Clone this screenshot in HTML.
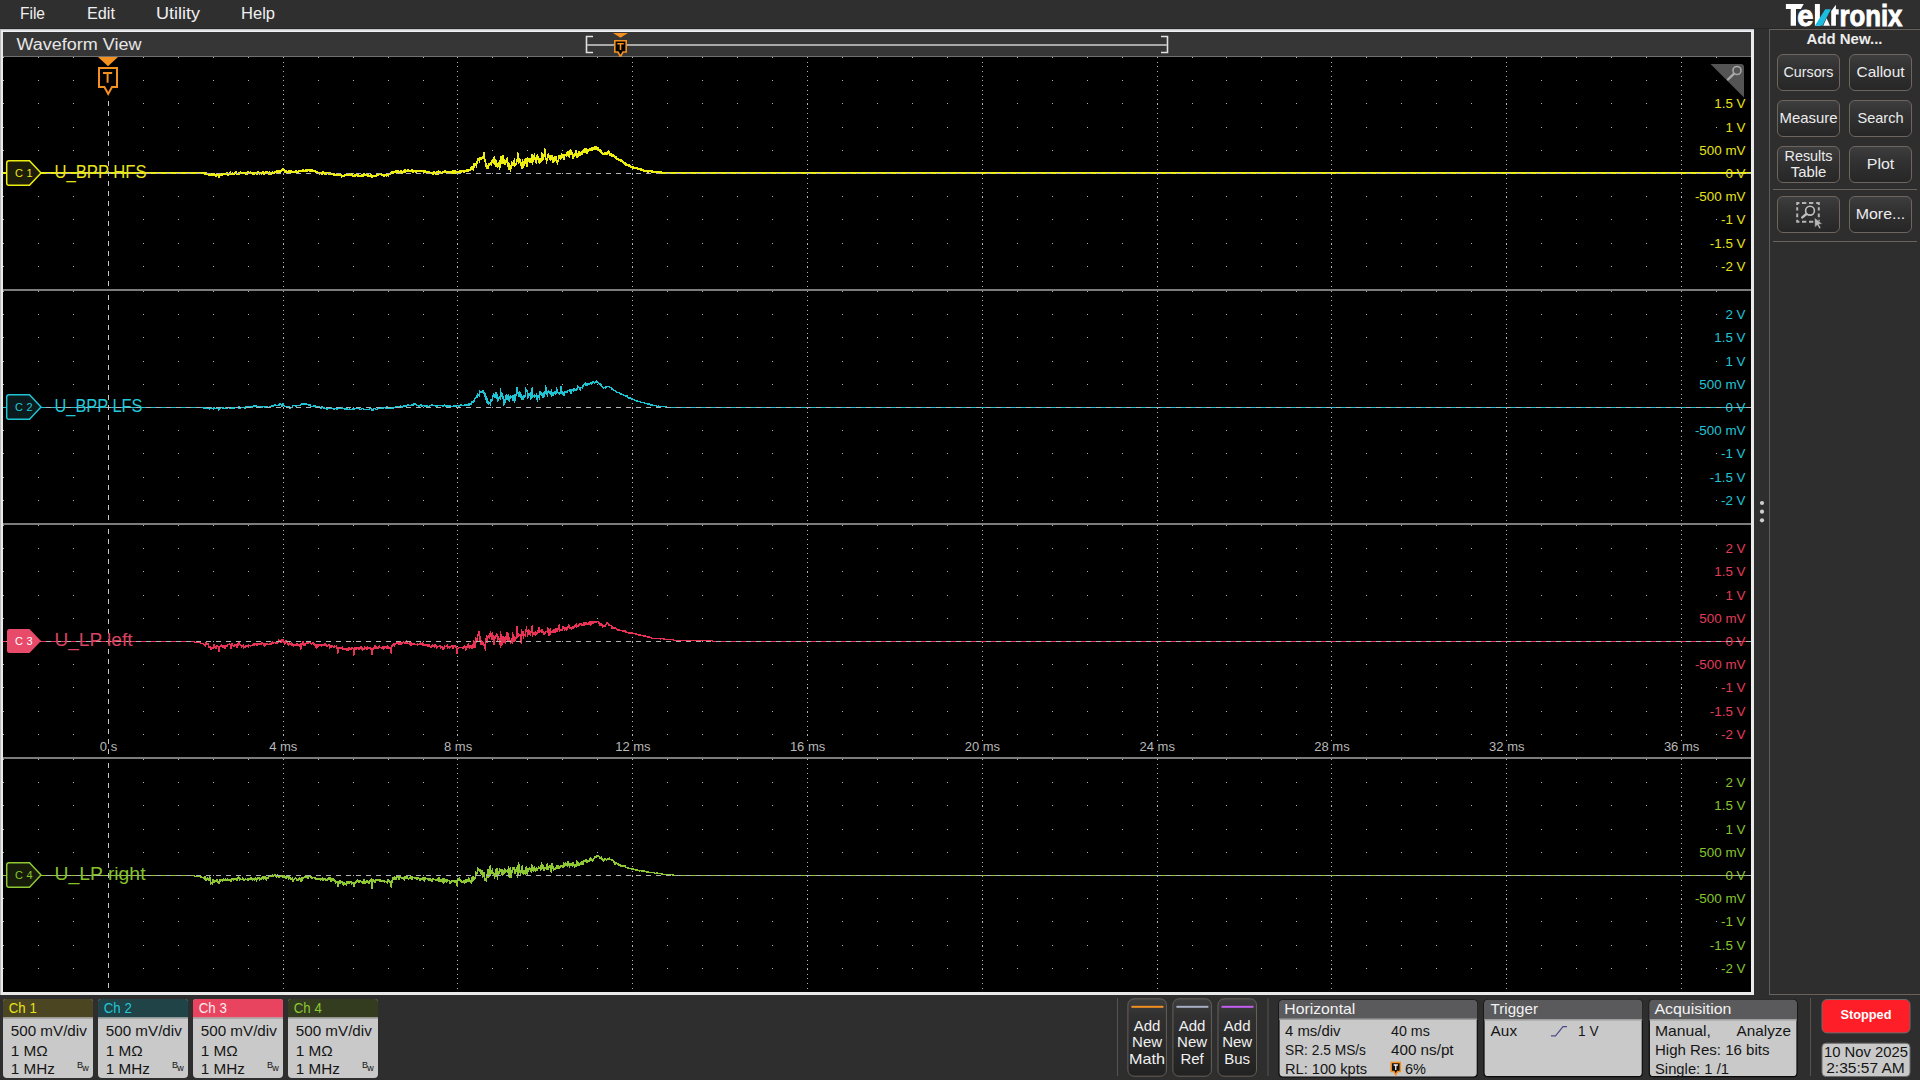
<!DOCTYPE html><html><head><meta charset="utf-8"><style>html,body{margin:0;padding:0;background:#2e2e2e;overflow:hidden;width:1920px;height:1080px}svg{display:block;font-family:"Liberation Sans",sans-serif}</style></head><body>
<svg width="1920" height="1080" viewBox="0 0 1920 1080" font-family="Liberation Sans, sans-serif">
<rect width="1920" height="1080" fill="#2e2e2e"/>
<rect x="0" y="0" width="1920" height="29" fill="#2f2f2f"/><rect x="0" y="28" width="1920" height="1" fill="#262626"/>
<text x="20" y="19" font-size="16" fill="#f0f0f0" textLength="25" lengthAdjust="spacingAndGlyphs">File</text>
<text x="87" y="19" font-size="16" fill="#f0f0f0" textLength="28" lengthAdjust="spacingAndGlyphs">Edit</text>
<text x="156" y="19" font-size="16" fill="#f0f0f0" textLength="44" lengthAdjust="spacingAndGlyphs">Utility</text>
<text x="241" y="19" font-size="16" fill="#f0f0f0" textLength="34" lengthAdjust="spacingAndGlyphs">Help</text>
<rect x="0" y="29" width="1754" height="966" fill="#e9e9e9"/>
<rect x="0" y="29" width="1" height="966" fill="#b9bcc0"/>
<rect x="0" y="29" width="1754" height="1" fill="#c2c5cb"/>
<rect x="1" y="30" width="1752" height="1" fill="#dfe0e2"/>
<rect x="1" y="31" width="1752" height="1" fill="#f1f2f4"/>
<rect x="3" y="32" width="1748" height="24" fill="#363636"/>
<rect x="3" y="56" width="1748" height="1" fill="#707070"/>
<text x="16.5" y="50" font-size="16" fill="#e6e6e6" textLength="125" lengthAdjust="spacingAndGlyphs">Waveform View</text>
<path d="M593 36.5H586.5V52.5H593M1161 36.5H1167.5V52.5H1161" stroke="#e0e0e0" stroke-width="1.6" fill="none"/>
<rect x="587" y="44" width="580" height="2" fill="#a9a9a9"/>
<path d="M613 33H628L620.5 37.8Z" fill="#f39020"/>
<path d="M614.8 40.8H626.2V52H623L620.5 56.5L618 52H614.8Z" fill="#000" stroke="#f39020" stroke-width="1.6"/>
<path d="M617.3 43.8H623.7M620.5 43.8V50" stroke="#f39020" stroke-width="1.6" fill="none"/>
<rect x="3" y="57" width="1748" height="935" fill="#000"/>
<path d="M3 57.5h1M3 80.5h1M3 103.5h1M3 127.5h1M3 150.5h1M3 173.5h1M3 196.5h1M3 219.5h1M3 243.5h1M3 266.5h1M3 291.5h1M3 314.5h1M3 337.5h1M3 361.5h1M3 384.5h1M3 407.5h1M3 430.5h1M3 453.5h1M3 477.5h1M3 500.5h1M3 525.5h1M3 548.5h1M3 571.5h1M3 595.5h1M3 618.5h1M3 641.5h1M3 664.5h1M3 687.5h1M3 711.5h1M3 734.5h1M3 759.5h1M3 782.5h1M3 805.5h1M3 829.5h1M3 852.5h1M3 875.5h1M3 898.5h1M3 921.5h1M3 945.5h1M3 968.5h1M38 57.5h1M38 80.5h1M38 103.5h1M38 127.5h1M38 150.5h1M38 173.5h1M38 196.5h1M38 219.5h1M38 243.5h1M38 266.5h1M38 291.5h1M38 314.5h1M38 337.5h1M38 361.5h1M38 384.5h1M38 407.5h1M38 430.5h1M38 453.5h1M38 477.5h1M38 500.5h1M38 525.5h1M38 548.5h1M38 571.5h1M38 595.5h1M38 618.5h1M38 641.5h1M38 664.5h1M38 687.5h1M38 711.5h1M38 734.5h1M38 759.5h1M38 782.5h1M38 805.5h1M38 829.5h1M38 852.5h1M38 875.5h1M38 898.5h1M38 921.5h1M38 945.5h1M38 968.5h1M73 57.5h1M73 80.5h1M73 103.5h1M73 127.5h1M73 150.5h1M73 173.5h1M73 196.5h1M73 219.5h1M73 243.5h1M73 266.5h1M73 291.5h1M73 314.5h1M73 337.5h1M73 361.5h1M73 384.5h1M73 407.5h1M73 430.5h1M73 453.5h1M73 477.5h1M73 500.5h1M73 525.5h1M73 548.5h1M73 571.5h1M73 595.5h1M73 618.5h1M73 641.5h1M73 664.5h1M73 687.5h1M73 711.5h1M73 734.5h1M73 759.5h1M73 782.5h1M73 805.5h1M73 829.5h1M73 852.5h1M73 875.5h1M73 898.5h1M73 921.5h1M73 945.5h1M73 968.5h1M143 57.5h1M143 80.5h1M143 103.5h1M143 127.5h1M143 150.5h1M143 173.5h1M143 196.5h1M143 219.5h1M143 243.5h1M143 266.5h1M143 291.5h1M143 314.5h1M143 337.5h1M143 361.5h1M143 384.5h1M143 407.5h1M143 430.5h1M143 453.5h1M143 477.5h1M143 500.5h1M143 525.5h1M143 548.5h1M143 571.5h1M143 595.5h1M143 618.5h1M143 641.5h1M143 664.5h1M143 687.5h1M143 711.5h1M143 734.5h1M143 759.5h1M143 782.5h1M143 805.5h1M143 829.5h1M143 852.5h1M143 875.5h1M143 898.5h1M143 921.5h1M143 945.5h1M143 968.5h1M178 57.5h1M178 80.5h1M178 103.5h1M178 127.5h1M178 150.5h1M178 173.5h1M178 196.5h1M178 219.5h1M178 243.5h1M178 266.5h1M178 291.5h1M178 314.5h1M178 337.5h1M178 361.5h1M178 384.5h1M178 407.5h1M178 430.5h1M178 453.5h1M178 477.5h1M178 500.5h1M178 525.5h1M178 548.5h1M178 571.5h1M178 595.5h1M178 618.5h1M178 641.5h1M178 664.5h1M178 687.5h1M178 711.5h1M178 734.5h1M178 759.5h1M178 782.5h1M178 805.5h1M178 829.5h1M178 852.5h1M178 875.5h1M178 898.5h1M178 921.5h1M178 945.5h1M178 968.5h1M213 57.5h1M213 80.5h1M213 103.5h1M213 127.5h1M213 150.5h1M213 173.5h1M213 196.5h1M213 219.5h1M213 243.5h1M213 266.5h1M213 291.5h1M213 314.5h1M213 337.5h1M213 361.5h1M213 384.5h1M213 407.5h1M213 430.5h1M213 453.5h1M213 477.5h1M213 500.5h1M213 525.5h1M213 548.5h1M213 571.5h1M213 595.5h1M213 618.5h1M213 641.5h1M213 664.5h1M213 687.5h1M213 711.5h1M213 734.5h1M213 759.5h1M213 782.5h1M213 805.5h1M213 829.5h1M213 852.5h1M213 875.5h1M213 898.5h1M213 921.5h1M213 945.5h1M213 968.5h1M248 57.5h1M248 80.5h1M248 103.5h1M248 127.5h1M248 150.5h1M248 173.5h1M248 196.5h1M248 219.5h1M248 243.5h1M248 266.5h1M248 291.5h1M248 314.5h1M248 337.5h1M248 361.5h1M248 384.5h1M248 407.5h1M248 430.5h1M248 453.5h1M248 477.5h1M248 500.5h1M248 525.5h1M248 548.5h1M248 571.5h1M248 595.5h1M248 618.5h1M248 641.5h1M248 664.5h1M248 687.5h1M248 711.5h1M248 734.5h1M248 759.5h1M248 782.5h1M248 805.5h1M248 829.5h1M248 852.5h1M248 875.5h1M248 898.5h1M248 921.5h1M248 945.5h1M248 968.5h1M283 57.5h1M283 62.5h1M283 66.5h1M283 71.5h1M283 76.5h1M283 80.5h1M283 85.5h1M283 90.5h1M283 94.5h1M283 99.5h1M283 103.5h1M283 104.5h1M283 108.5h1M283 113.5h1M283 118.5h1M283 122.5h1M283 127.5h1M283 132.5h1M283 136.5h1M283 141.5h1M283 146.5h1M283 150.5h1M283 155.5h1M283 160.5h1M283 164.5h1M283 169.5h1M283 173.5h1M283 174.5h1M283 178.5h1M283 183.5h1M283 188.5h1M283 192.5h1M283 196.5h1M283 197.5h1M283 202.5h1M283 206.5h1M283 211.5h1M283 216.5h1M283 219.5h1M283 220.5h1M283 225.5h1M283 230.5h1M283 234.5h1M283 239.5h1M283 243.5h1M283 244.5h1M283 248.5h1M283 253.5h1M283 258.5h1M283 262.5h1M283 266.5h1M283 267.5h1M283 272.5h1M283 276.5h1M283 281.5h1M283 286.5h1M283 291.5h1M283 296.5h1M283 300.5h1M283 305.5h1M283 310.5h1M283 314.5h1M283 319.5h1M283 324.5h1M283 328.5h1M283 333.5h1M283 337.5h1M283 338.5h1M283 342.5h1M283 347.5h1M283 352.5h1M283 356.5h1M283 361.5h1M283 366.5h1M283 370.5h1M283 375.5h1M283 380.5h1M283 384.5h1M283 389.5h1M283 394.5h1M283 398.5h1M283 403.5h1M283 407.5h1M283 408.5h1M283 412.5h1M283 417.5h1M283 422.5h1M283 426.5h1M283 430.5h1M283 431.5h1M283 436.5h1M283 440.5h1M283 445.5h1M283 450.5h1M283 453.5h1M283 454.5h1M283 459.5h1M283 464.5h1M283 468.5h1M283 473.5h1M283 477.5h1M283 478.5h1M283 482.5h1M283 487.5h1M283 492.5h1M283 496.5h1M283 500.5h1M283 501.5h1M283 506.5h1M283 510.5h1M283 515.5h1M283 520.5h1M283 525.5h1M283 530.5h1M283 534.5h1M283 539.5h1M283 544.5h1M283 548.5h1M283 553.5h1M283 558.5h1M283 562.5h1M283 567.5h1M283 571.5h1M283 572.5h1M283 576.5h1M283 581.5h1M283 586.5h1M283 590.5h1M283 595.5h1M283 600.5h1M283 604.5h1M283 609.5h1M283 614.5h1M283 618.5h1M283 623.5h1M283 628.5h1M283 632.5h1M283 637.5h1M283 641.5h1M283 642.5h1M283 646.5h1M283 651.5h1M283 656.5h1M283 660.5h1M283 664.5h1M283 665.5h1M283 670.5h1M283 674.5h1M283 679.5h1M283 684.5h1M283 687.5h1M283 688.5h1M283 693.5h1M283 698.5h1M283 702.5h1M283 707.5h1M283 711.5h1M283 712.5h1M283 716.5h1M283 721.5h1M283 726.5h1M283 730.5h1M283 734.5h1M283 735.5h1M283 740.5h1M283 744.5h1M283 749.5h1M283 754.5h1M283 759.5h1M283 764.5h1M283 768.5h1M283 773.5h1M283 778.5h1M283 782.5h1M283 787.5h1M283 792.5h1M283 796.5h1M283 801.5h1M283 805.5h1M283 806.5h1M283 810.5h1M283 815.5h1M283 820.5h1M283 824.5h1M283 829.5h1M283 834.5h1M283 838.5h1M283 843.5h1M283 848.5h1M283 852.5h1M283 857.5h1M283 862.5h1M283 866.5h1M283 871.5h1M283 875.5h1M283 876.5h1M283 880.5h1M283 885.5h1M283 890.5h1M283 894.5h1M283 898.5h1M283 899.5h1M283 904.5h1M283 908.5h1M283 913.5h1M283 918.5h1M283 921.5h1M283 922.5h1M283 927.5h1M283 932.5h1M283 936.5h1M283 941.5h1M283 945.5h1M283 946.5h1M283 950.5h1M283 955.5h1M283 960.5h1M283 964.5h1M283 968.5h1M283 969.5h1M283 974.5h1M283 978.5h1M283 983.5h1M283 988.5h1M318 57.5h1M318 80.5h1M318 103.5h1M318 127.5h1M318 150.5h1M318 173.5h1M318 196.5h1M318 219.5h1M318 243.5h1M318 266.5h1M318 291.5h1M318 314.5h1M318 337.5h1M318 361.5h1M318 384.5h1M318 407.5h1M318 430.5h1M318 453.5h1M318 477.5h1M318 500.5h1M318 525.5h1M318 548.5h1M318 571.5h1M318 595.5h1M318 618.5h1M318 641.5h1M318 664.5h1M318 687.5h1M318 711.5h1M318 734.5h1M318 759.5h1M318 782.5h1M318 805.5h1M318 829.5h1M318 852.5h1M318 875.5h1M318 898.5h1M318 921.5h1M318 945.5h1M318 968.5h1M353 57.5h1M353 80.5h1M353 103.5h1M353 127.5h1M353 150.5h1M353 173.5h1M353 196.5h1M353 219.5h1M353 243.5h1M353 266.5h1M353 291.5h1M353 314.5h1M353 337.5h1M353 361.5h1M353 384.5h1M353 407.5h1M353 430.5h1M353 453.5h1M353 477.5h1M353 500.5h1M353 525.5h1M353 548.5h1M353 571.5h1M353 595.5h1M353 618.5h1M353 641.5h1M353 664.5h1M353 687.5h1M353 711.5h1M353 734.5h1M353 759.5h1M353 782.5h1M353 805.5h1M353 829.5h1M353 852.5h1M353 875.5h1M353 898.5h1M353 921.5h1M353 945.5h1M353 968.5h1M388 57.5h1M388 80.5h1M388 103.5h1M388 127.5h1M388 150.5h1M388 173.5h1M388 196.5h1M388 219.5h1M388 243.5h1M388 266.5h1M388 291.5h1M388 314.5h1M388 337.5h1M388 361.5h1M388 384.5h1M388 407.5h1M388 430.5h1M388 453.5h1M388 477.5h1M388 500.5h1M388 525.5h1M388 548.5h1M388 571.5h1M388 595.5h1M388 618.5h1M388 641.5h1M388 664.5h1M388 687.5h1M388 711.5h1M388 734.5h1M388 759.5h1M388 782.5h1M388 805.5h1M388 829.5h1M388 852.5h1M388 875.5h1M388 898.5h1M388 921.5h1M388 945.5h1M388 968.5h1M423 57.5h1M423 80.5h1M423 103.5h1M423 127.5h1M423 150.5h1M423 173.5h1M423 196.5h1M423 219.5h1M423 243.5h1M423 266.5h1M423 291.5h1M423 314.5h1M423 337.5h1M423 361.5h1M423 384.5h1M423 407.5h1M423 430.5h1M423 453.5h1M423 477.5h1M423 500.5h1M423 525.5h1M423 548.5h1M423 571.5h1M423 595.5h1M423 618.5h1M423 641.5h1M423 664.5h1M423 687.5h1M423 711.5h1M423 734.5h1M423 759.5h1M423 782.5h1M423 805.5h1M423 829.5h1M423 852.5h1M423 875.5h1M423 898.5h1M423 921.5h1M423 945.5h1M423 968.5h1M457 57.5h1M457 62.5h1M457 66.5h1M457 71.5h1M457 76.5h1M457 80.5h1M457 85.5h1M457 90.5h1M457 94.5h1M457 99.5h1M457 103.5h1M457 104.5h1M457 108.5h1M457 113.5h1M457 118.5h1M457 122.5h1M457 127.5h1M457 132.5h1M457 136.5h1M457 141.5h1M457 146.5h1M457 150.5h1M457 155.5h1M457 160.5h1M457 164.5h1M457 169.5h1M457 173.5h1M457 174.5h1M457 178.5h1M457 183.5h1M457 188.5h1M457 192.5h1M457 196.5h1M457 197.5h1M457 202.5h1M457 206.5h1M457 211.5h1M457 216.5h1M457 219.5h1M457 220.5h1M457 225.5h1M457 230.5h1M457 234.5h1M457 239.5h1M457 243.5h1M457 244.5h1M457 248.5h1M457 253.5h1M457 258.5h1M457 262.5h1M457 266.5h1M457 267.5h1M457 272.5h1M457 276.5h1M457 281.5h1M457 286.5h1M457 291.5h1M457 296.5h1M457 300.5h1M457 305.5h1M457 310.5h1M457 314.5h1M457 319.5h1M457 324.5h1M457 328.5h1M457 333.5h1M457 337.5h1M457 338.5h1M457 342.5h1M457 347.5h1M457 352.5h1M457 356.5h1M457 361.5h1M457 366.5h1M457 370.5h1M457 375.5h1M457 380.5h1M457 384.5h1M457 389.5h1M457 394.5h1M457 398.5h1M457 403.5h1M457 407.5h1M457 408.5h1M457 412.5h1M457 417.5h1M457 422.5h1M457 426.5h1M457 430.5h1M457 431.5h1M457 436.5h1M457 440.5h1M457 445.5h1M457 450.5h1M457 453.5h1M457 454.5h1M457 459.5h1M457 464.5h1M457 468.5h1M457 473.5h1M457 477.5h1M457 478.5h1M457 482.5h1M457 487.5h1M457 492.5h1M457 496.5h1M457 500.5h1M457 501.5h1M457 506.5h1M457 510.5h1M457 515.5h1M457 520.5h1M457 525.5h1M457 530.5h1M457 534.5h1M457 539.5h1M457 544.5h1M457 548.5h1M457 553.5h1M457 558.5h1M457 562.5h1M457 567.5h1M457 571.5h1M457 572.5h1M457 576.5h1M457 581.5h1M457 586.5h1M457 590.5h1M457 595.5h1M457 600.5h1M457 604.5h1M457 609.5h1M457 614.5h1M457 618.5h1M457 623.5h1M457 628.5h1M457 632.5h1M457 637.5h1M457 641.5h1M457 642.5h1M457 646.5h1M457 651.5h1M457 656.5h1M457 660.5h1M457 664.5h1M457 665.5h1M457 670.5h1M457 674.5h1M457 679.5h1M457 684.5h1M457 687.5h1M457 688.5h1M457 693.5h1M457 698.5h1M457 702.5h1M457 707.5h1M457 711.5h1M457 712.5h1M457 716.5h1M457 721.5h1M457 726.5h1M457 730.5h1M457 734.5h1M457 735.5h1M457 740.5h1M457 744.5h1M457 749.5h1M457 754.5h1M457 759.5h1M457 764.5h1M457 768.5h1M457 773.5h1M457 778.5h1M457 782.5h1M457 787.5h1M457 792.5h1M457 796.5h1M457 801.5h1M457 805.5h1M457 806.5h1M457 810.5h1M457 815.5h1M457 820.5h1M457 824.5h1M457 829.5h1M457 834.5h1M457 838.5h1M457 843.5h1M457 848.5h1M457 852.5h1M457 857.5h1M457 862.5h1M457 866.5h1M457 871.5h1M457 875.5h1M457 876.5h1M457 880.5h1M457 885.5h1M457 890.5h1M457 894.5h1M457 898.5h1M457 899.5h1M457 904.5h1M457 908.5h1M457 913.5h1M457 918.5h1M457 921.5h1M457 922.5h1M457 927.5h1M457 932.5h1M457 936.5h1M457 941.5h1M457 945.5h1M457 946.5h1M457 950.5h1M457 955.5h1M457 960.5h1M457 964.5h1M457 968.5h1M457 969.5h1M457 974.5h1M457 978.5h1M457 983.5h1M457 988.5h1M492 57.5h1M492 80.5h1M492 103.5h1M492 127.5h1M492 150.5h1M492 173.5h1M492 196.5h1M492 219.5h1M492 243.5h1M492 266.5h1M492 291.5h1M492 314.5h1M492 337.5h1M492 361.5h1M492 384.5h1M492 407.5h1M492 430.5h1M492 453.5h1M492 477.5h1M492 500.5h1M492 525.5h1M492 548.5h1M492 571.5h1M492 595.5h1M492 618.5h1M492 641.5h1M492 664.5h1M492 687.5h1M492 711.5h1M492 734.5h1M492 759.5h1M492 782.5h1M492 805.5h1M492 829.5h1M492 852.5h1M492 875.5h1M492 898.5h1M492 921.5h1M492 945.5h1M492 968.5h1M527 57.5h1M527 80.5h1M527 103.5h1M527 127.5h1M527 150.5h1M527 173.5h1M527 196.5h1M527 219.5h1M527 243.5h1M527 266.5h1M527 291.5h1M527 314.5h1M527 337.5h1M527 361.5h1M527 384.5h1M527 407.5h1M527 430.5h1M527 453.5h1M527 477.5h1M527 500.5h1M527 525.5h1M527 548.5h1M527 571.5h1M527 595.5h1M527 618.5h1M527 641.5h1M527 664.5h1M527 687.5h1M527 711.5h1M527 734.5h1M527 759.5h1M527 782.5h1M527 805.5h1M527 829.5h1M527 852.5h1M527 875.5h1M527 898.5h1M527 921.5h1M527 945.5h1M527 968.5h1M562 57.5h1M562 80.5h1M562 103.5h1M562 127.5h1M562 150.5h1M562 173.5h1M562 196.5h1M562 219.5h1M562 243.5h1M562 266.5h1M562 291.5h1M562 314.5h1M562 337.5h1M562 361.5h1M562 384.5h1M562 407.5h1M562 430.5h1M562 453.5h1M562 477.5h1M562 500.5h1M562 525.5h1M562 548.5h1M562 571.5h1M562 595.5h1M562 618.5h1M562 641.5h1M562 664.5h1M562 687.5h1M562 711.5h1M562 734.5h1M562 759.5h1M562 782.5h1M562 805.5h1M562 829.5h1M562 852.5h1M562 875.5h1M562 898.5h1M562 921.5h1M562 945.5h1M562 968.5h1M597 57.5h1M597 80.5h1M597 103.5h1M597 127.5h1M597 150.5h1M597 173.5h1M597 196.5h1M597 219.5h1M597 243.5h1M597 266.5h1M597 291.5h1M597 314.5h1M597 337.5h1M597 361.5h1M597 384.5h1M597 407.5h1M597 430.5h1M597 453.5h1M597 477.5h1M597 500.5h1M597 525.5h1M597 548.5h1M597 571.5h1M597 595.5h1M597 618.5h1M597 641.5h1M597 664.5h1M597 687.5h1M597 711.5h1M597 734.5h1M597 759.5h1M597 782.5h1M597 805.5h1M597 829.5h1M597 852.5h1M597 875.5h1M597 898.5h1M597 921.5h1M597 945.5h1M597 968.5h1M632 57.5h1M632 62.5h1M632 66.5h1M632 71.5h1M632 76.5h1M632 80.5h1M632 85.5h1M632 90.5h1M632 94.5h1M632 99.5h1M632 103.5h1M632 104.5h1M632 108.5h1M632 113.5h1M632 118.5h1M632 122.5h1M632 127.5h1M632 132.5h1M632 136.5h1M632 141.5h1M632 146.5h1M632 150.5h1M632 155.5h1M632 160.5h1M632 164.5h1M632 169.5h1M632 173.5h1M632 174.5h1M632 178.5h1M632 183.5h1M632 188.5h1M632 192.5h1M632 196.5h1M632 197.5h1M632 202.5h1M632 206.5h1M632 211.5h1M632 216.5h1M632 219.5h1M632 220.5h1M632 225.5h1M632 230.5h1M632 234.5h1M632 239.5h1M632 243.5h1M632 244.5h1M632 248.5h1M632 253.5h1M632 258.5h1M632 262.5h1M632 266.5h1M632 267.5h1M632 272.5h1M632 276.5h1M632 281.5h1M632 286.5h1M632 291.5h1M632 296.5h1M632 300.5h1M632 305.5h1M632 310.5h1M632 314.5h1M632 319.5h1M632 324.5h1M632 328.5h1M632 333.5h1M632 337.5h1M632 338.5h1M632 342.5h1M632 347.5h1M632 352.5h1M632 356.5h1M632 361.5h1M632 366.5h1M632 370.5h1M632 375.5h1M632 380.5h1M632 384.5h1M632 389.5h1M632 394.5h1M632 398.5h1M632 403.5h1M632 407.5h1M632 408.5h1M632 412.5h1M632 417.5h1M632 422.5h1M632 426.5h1M632 430.5h1M632 431.5h1M632 436.5h1M632 440.5h1M632 445.5h1M632 450.5h1M632 453.5h1M632 454.5h1M632 459.5h1M632 464.5h1M632 468.5h1M632 473.5h1M632 477.5h1M632 478.5h1M632 482.5h1M632 487.5h1M632 492.5h1M632 496.5h1M632 500.5h1M632 501.5h1M632 506.5h1M632 510.5h1M632 515.5h1M632 520.5h1M632 525.5h1M632 530.5h1M632 534.5h1M632 539.5h1M632 544.5h1M632 548.5h1M632 553.5h1M632 558.5h1M632 562.5h1M632 567.5h1M632 571.5h1M632 572.5h1M632 576.5h1M632 581.5h1M632 586.5h1M632 590.5h1M632 595.5h1M632 600.5h1M632 604.5h1M632 609.5h1M632 614.5h1M632 618.5h1M632 623.5h1M632 628.5h1M632 632.5h1M632 637.5h1M632 641.5h1M632 642.5h1M632 646.5h1M632 651.5h1M632 656.5h1M632 660.5h1M632 664.5h1M632 665.5h1M632 670.5h1M632 674.5h1M632 679.5h1M632 684.5h1M632 687.5h1M632 688.5h1M632 693.5h1M632 698.5h1M632 702.5h1M632 707.5h1M632 711.5h1M632 712.5h1M632 716.5h1M632 721.5h1M632 726.5h1M632 730.5h1M632 734.5h1M632 735.5h1M632 740.5h1M632 744.5h1M632 749.5h1M632 754.5h1M632 759.5h1M632 764.5h1M632 768.5h1M632 773.5h1M632 778.5h1M632 782.5h1M632 787.5h1M632 792.5h1M632 796.5h1M632 801.5h1M632 805.5h1M632 806.5h1M632 810.5h1M632 815.5h1M632 820.5h1M632 824.5h1M632 829.5h1M632 834.5h1M632 838.5h1M632 843.5h1M632 848.5h1M632 852.5h1M632 857.5h1M632 862.5h1M632 866.5h1M632 871.5h1M632 875.5h1M632 876.5h1M632 880.5h1M632 885.5h1M632 890.5h1M632 894.5h1M632 898.5h1M632 899.5h1M632 904.5h1M632 908.5h1M632 913.5h1M632 918.5h1M632 921.5h1M632 922.5h1M632 927.5h1M632 932.5h1M632 936.5h1M632 941.5h1M632 945.5h1M632 946.5h1M632 950.5h1M632 955.5h1M632 960.5h1M632 964.5h1M632 968.5h1M632 969.5h1M632 974.5h1M632 978.5h1M632 983.5h1M632 988.5h1M667 57.5h1M667 80.5h1M667 103.5h1M667 127.5h1M667 150.5h1M667 173.5h1M667 196.5h1M667 219.5h1M667 243.5h1M667 266.5h1M667 291.5h1M667 314.5h1M667 337.5h1M667 361.5h1M667 384.5h1M667 407.5h1M667 430.5h1M667 453.5h1M667 477.5h1M667 500.5h1M667 525.5h1M667 548.5h1M667 571.5h1M667 595.5h1M667 618.5h1M667 641.5h1M667 664.5h1M667 687.5h1M667 711.5h1M667 734.5h1M667 759.5h1M667 782.5h1M667 805.5h1M667 829.5h1M667 852.5h1M667 875.5h1M667 898.5h1M667 921.5h1M667 945.5h1M667 968.5h1M702 57.5h1M702 80.5h1M702 103.5h1M702 127.5h1M702 150.5h1M702 173.5h1M702 196.5h1M702 219.5h1M702 243.5h1M702 266.5h1M702 291.5h1M702 314.5h1M702 337.5h1M702 361.5h1M702 384.5h1M702 407.5h1M702 430.5h1M702 453.5h1M702 477.5h1M702 500.5h1M702 525.5h1M702 548.5h1M702 571.5h1M702 595.5h1M702 618.5h1M702 641.5h1M702 664.5h1M702 687.5h1M702 711.5h1M702 734.5h1M702 759.5h1M702 782.5h1M702 805.5h1M702 829.5h1M702 852.5h1M702 875.5h1M702 898.5h1M702 921.5h1M702 945.5h1M702 968.5h1M737 57.5h1M737 80.5h1M737 103.5h1M737 127.5h1M737 150.5h1M737 173.5h1M737 196.5h1M737 219.5h1M737 243.5h1M737 266.5h1M737 291.5h1M737 314.5h1M737 337.5h1M737 361.5h1M737 384.5h1M737 407.5h1M737 430.5h1M737 453.5h1M737 477.5h1M737 500.5h1M737 525.5h1M737 548.5h1M737 571.5h1M737 595.5h1M737 618.5h1M737 641.5h1M737 664.5h1M737 687.5h1M737 711.5h1M737 734.5h1M737 759.5h1M737 782.5h1M737 805.5h1M737 829.5h1M737 852.5h1M737 875.5h1M737 898.5h1M737 921.5h1M737 945.5h1M737 968.5h1M772 57.5h1M772 80.5h1M772 103.5h1M772 127.5h1M772 150.5h1M772 173.5h1M772 196.5h1M772 219.5h1M772 243.5h1M772 266.5h1M772 291.5h1M772 314.5h1M772 337.5h1M772 361.5h1M772 384.5h1M772 407.5h1M772 430.5h1M772 453.5h1M772 477.5h1M772 500.5h1M772 525.5h1M772 548.5h1M772 571.5h1M772 595.5h1M772 618.5h1M772 641.5h1M772 664.5h1M772 687.5h1M772 711.5h1M772 734.5h1M772 759.5h1M772 782.5h1M772 805.5h1M772 829.5h1M772 852.5h1M772 875.5h1M772 898.5h1M772 921.5h1M772 945.5h1M772 968.5h1M807 57.5h1M807 62.5h1M807 66.5h1M807 71.5h1M807 76.5h1M807 80.5h1M807 85.5h1M807 90.5h1M807 94.5h1M807 99.5h1M807 103.5h1M807 104.5h1M807 108.5h1M807 113.5h1M807 118.5h1M807 122.5h1M807 127.5h1M807 132.5h1M807 136.5h1M807 141.5h1M807 146.5h1M807 150.5h1M807 155.5h1M807 160.5h1M807 164.5h1M807 169.5h1M807 173.5h1M807 174.5h1M807 178.5h1M807 183.5h1M807 188.5h1M807 192.5h1M807 196.5h1M807 197.5h1M807 202.5h1M807 206.5h1M807 211.5h1M807 216.5h1M807 219.5h1M807 220.5h1M807 225.5h1M807 230.5h1M807 234.5h1M807 239.5h1M807 243.5h1M807 244.5h1M807 248.5h1M807 253.5h1M807 258.5h1M807 262.5h1M807 266.5h1M807 267.5h1M807 272.5h1M807 276.5h1M807 281.5h1M807 286.5h1M807 291.5h1M807 296.5h1M807 300.5h1M807 305.5h1M807 310.5h1M807 314.5h1M807 319.5h1M807 324.5h1M807 328.5h1M807 333.5h1M807 337.5h1M807 338.5h1M807 342.5h1M807 347.5h1M807 352.5h1M807 356.5h1M807 361.5h1M807 366.5h1M807 370.5h1M807 375.5h1M807 380.5h1M807 384.5h1M807 389.5h1M807 394.5h1M807 398.5h1M807 403.5h1M807 407.5h1M807 408.5h1M807 412.5h1M807 417.5h1M807 422.5h1M807 426.5h1M807 430.5h1M807 431.5h1M807 436.5h1M807 440.5h1M807 445.5h1M807 450.5h1M807 453.5h1M807 454.5h1M807 459.5h1M807 464.5h1M807 468.5h1M807 473.5h1M807 477.5h1M807 478.5h1M807 482.5h1M807 487.5h1M807 492.5h1M807 496.5h1M807 500.5h1M807 501.5h1M807 506.5h1M807 510.5h1M807 515.5h1M807 520.5h1M807 525.5h1M807 530.5h1M807 534.5h1M807 539.5h1M807 544.5h1M807 548.5h1M807 553.5h1M807 558.5h1M807 562.5h1M807 567.5h1M807 571.5h1M807 572.5h1M807 576.5h1M807 581.5h1M807 586.5h1M807 590.5h1M807 595.5h1M807 600.5h1M807 604.5h1M807 609.5h1M807 614.5h1M807 618.5h1M807 623.5h1M807 628.5h1M807 632.5h1M807 637.5h1M807 641.5h1M807 642.5h1M807 646.5h1M807 651.5h1M807 656.5h1M807 660.5h1M807 664.5h1M807 665.5h1M807 670.5h1M807 674.5h1M807 679.5h1M807 684.5h1M807 687.5h1M807 688.5h1M807 693.5h1M807 698.5h1M807 702.5h1M807 707.5h1M807 711.5h1M807 712.5h1M807 716.5h1M807 721.5h1M807 726.5h1M807 730.5h1M807 734.5h1M807 735.5h1M807 740.5h1M807 744.5h1M807 749.5h1M807 754.5h1M807 759.5h1M807 764.5h1M807 768.5h1M807 773.5h1M807 778.5h1M807 782.5h1M807 787.5h1M807 792.5h1M807 796.5h1M807 801.5h1M807 805.5h1M807 806.5h1M807 810.5h1M807 815.5h1M807 820.5h1M807 824.5h1M807 829.5h1M807 834.5h1M807 838.5h1M807 843.5h1M807 848.5h1M807 852.5h1M807 857.5h1M807 862.5h1M807 866.5h1M807 871.5h1M807 875.5h1M807 876.5h1M807 880.5h1M807 885.5h1M807 890.5h1M807 894.5h1M807 898.5h1M807 899.5h1M807 904.5h1M807 908.5h1M807 913.5h1M807 918.5h1M807 921.5h1M807 922.5h1M807 927.5h1M807 932.5h1M807 936.5h1M807 941.5h1M807 945.5h1M807 946.5h1M807 950.5h1M807 955.5h1M807 960.5h1M807 964.5h1M807 968.5h1M807 969.5h1M807 974.5h1M807 978.5h1M807 983.5h1M807 988.5h1M842 57.5h1M842 80.5h1M842 103.5h1M842 127.5h1M842 150.5h1M842 173.5h1M842 196.5h1M842 219.5h1M842 243.5h1M842 266.5h1M842 291.5h1M842 314.5h1M842 337.5h1M842 361.5h1M842 384.5h1M842 407.5h1M842 430.5h1M842 453.5h1M842 477.5h1M842 500.5h1M842 525.5h1M842 548.5h1M842 571.5h1M842 595.5h1M842 618.5h1M842 641.5h1M842 664.5h1M842 687.5h1M842 711.5h1M842 734.5h1M842 759.5h1M842 782.5h1M842 805.5h1M842 829.5h1M842 852.5h1M842 875.5h1M842 898.5h1M842 921.5h1M842 945.5h1M842 968.5h1M877 57.5h1M877 80.5h1M877 103.5h1M877 127.5h1M877 150.5h1M877 173.5h1M877 196.5h1M877 219.5h1M877 243.5h1M877 266.5h1M877 291.5h1M877 314.5h1M877 337.5h1M877 361.5h1M877 384.5h1M877 407.5h1M877 430.5h1M877 453.5h1M877 477.5h1M877 500.5h1M877 525.5h1M877 548.5h1M877 571.5h1M877 595.5h1M877 618.5h1M877 641.5h1M877 664.5h1M877 687.5h1M877 711.5h1M877 734.5h1M877 759.5h1M877 782.5h1M877 805.5h1M877 829.5h1M877 852.5h1M877 875.5h1M877 898.5h1M877 921.5h1M877 945.5h1M877 968.5h1M912 57.5h1M912 80.5h1M912 103.5h1M912 127.5h1M912 150.5h1M912 173.5h1M912 196.5h1M912 219.5h1M912 243.5h1M912 266.5h1M912 291.5h1M912 314.5h1M912 337.5h1M912 361.5h1M912 384.5h1M912 407.5h1M912 430.5h1M912 453.5h1M912 477.5h1M912 500.5h1M912 525.5h1M912 548.5h1M912 571.5h1M912 595.5h1M912 618.5h1M912 641.5h1M912 664.5h1M912 687.5h1M912 711.5h1M912 734.5h1M912 759.5h1M912 782.5h1M912 805.5h1M912 829.5h1M912 852.5h1M912 875.5h1M912 898.5h1M912 921.5h1M912 945.5h1M912 968.5h1M947 57.5h1M947 80.5h1M947 103.5h1M947 127.5h1M947 150.5h1M947 173.5h1M947 196.5h1M947 219.5h1M947 243.5h1M947 266.5h1M947 291.5h1M947 314.5h1M947 337.5h1M947 361.5h1M947 384.5h1M947 407.5h1M947 430.5h1M947 453.5h1M947 477.5h1M947 500.5h1M947 525.5h1M947 548.5h1M947 571.5h1M947 595.5h1M947 618.5h1M947 641.5h1M947 664.5h1M947 687.5h1M947 711.5h1M947 734.5h1M947 759.5h1M947 782.5h1M947 805.5h1M947 829.5h1M947 852.5h1M947 875.5h1M947 898.5h1M947 921.5h1M947 945.5h1M947 968.5h1M982 57.5h1M982 62.5h1M982 66.5h1M982 71.5h1M982 76.5h1M982 80.5h1M982 85.5h1M982 90.5h1M982 94.5h1M982 99.5h1M982 103.5h1M982 104.5h1M982 108.5h1M982 113.5h1M982 118.5h1M982 122.5h1M982 127.5h1M982 132.5h1M982 136.5h1M982 141.5h1M982 146.5h1M982 150.5h1M982 155.5h1M982 160.5h1M982 164.5h1M982 169.5h1M982 173.5h1M982 174.5h1M982 178.5h1M982 183.5h1M982 188.5h1M982 192.5h1M982 196.5h1M982 197.5h1M982 202.5h1M982 206.5h1M982 211.5h1M982 216.5h1M982 219.5h1M982 220.5h1M982 225.5h1M982 230.5h1M982 234.5h1M982 239.5h1M982 243.5h1M982 244.5h1M982 248.5h1M982 253.5h1M982 258.5h1M982 262.5h1M982 266.5h1M982 267.5h1M982 272.5h1M982 276.5h1M982 281.5h1M982 286.5h1M982 291.5h1M982 296.5h1M982 300.5h1M982 305.5h1M982 310.5h1M982 314.5h1M982 319.5h1M982 324.5h1M982 328.5h1M982 333.5h1M982 337.5h1M982 338.5h1M982 342.5h1M982 347.5h1M982 352.5h1M982 356.5h1M982 361.5h1M982 366.5h1M982 370.5h1M982 375.5h1M982 380.5h1M982 384.5h1M982 389.5h1M982 394.5h1M982 398.5h1M982 403.5h1M982 407.5h1M982 408.5h1M982 412.5h1M982 417.5h1M982 422.5h1M982 426.5h1M982 430.5h1M982 431.5h1M982 436.5h1M982 440.5h1M982 445.5h1M982 450.5h1M982 453.5h1M982 454.5h1M982 459.5h1M982 464.5h1M982 468.5h1M982 473.5h1M982 477.5h1M982 478.5h1M982 482.5h1M982 487.5h1M982 492.5h1M982 496.5h1M982 500.5h1M982 501.5h1M982 506.5h1M982 510.5h1M982 515.5h1M982 520.5h1M982 525.5h1M982 530.5h1M982 534.5h1M982 539.5h1M982 544.5h1M982 548.5h1M982 553.5h1M982 558.5h1M982 562.5h1M982 567.5h1M982 571.5h1M982 572.5h1M982 576.5h1M982 581.5h1M982 586.5h1M982 590.5h1M982 595.5h1M982 600.5h1M982 604.5h1M982 609.5h1M982 614.5h1M982 618.5h1M982 623.5h1M982 628.5h1M982 632.5h1M982 637.5h1M982 641.5h1M982 642.5h1M982 646.5h1M982 651.5h1M982 656.5h1M982 660.5h1M982 664.5h1M982 665.5h1M982 670.5h1M982 674.5h1M982 679.5h1M982 684.5h1M982 687.5h1M982 688.5h1M982 693.5h1M982 698.5h1M982 702.5h1M982 707.5h1M982 711.5h1M982 712.5h1M982 716.5h1M982 721.5h1M982 726.5h1M982 730.5h1M982 734.5h1M982 735.5h1M982 740.5h1M982 744.5h1M982 749.5h1M982 754.5h1M982 759.5h1M982 764.5h1M982 768.5h1M982 773.5h1M982 778.5h1M982 782.5h1M982 787.5h1M982 792.5h1M982 796.5h1M982 801.5h1M982 805.5h1M982 806.5h1M982 810.5h1M982 815.5h1M982 820.5h1M982 824.5h1M982 829.5h1M982 834.5h1M982 838.5h1M982 843.5h1M982 848.5h1M982 852.5h1M982 857.5h1M982 862.5h1M982 866.5h1M982 871.5h1M982 875.5h1M982 876.5h1M982 880.5h1M982 885.5h1M982 890.5h1M982 894.5h1M982 898.5h1M982 899.5h1M982 904.5h1M982 908.5h1M982 913.5h1M982 918.5h1M982 921.5h1M982 922.5h1M982 927.5h1M982 932.5h1M982 936.5h1M982 941.5h1M982 945.5h1M982 946.5h1M982 950.5h1M982 955.5h1M982 960.5h1M982 964.5h1M982 968.5h1M982 969.5h1M982 974.5h1M982 978.5h1M982 983.5h1M982 988.5h1M1017 57.5h1M1017 80.5h1M1017 103.5h1M1017 127.5h1M1017 150.5h1M1017 173.5h1M1017 196.5h1M1017 219.5h1M1017 243.5h1M1017 266.5h1M1017 291.5h1M1017 314.5h1M1017 337.5h1M1017 361.5h1M1017 384.5h1M1017 407.5h1M1017 430.5h1M1017 453.5h1M1017 477.5h1M1017 500.5h1M1017 525.5h1M1017 548.5h1M1017 571.5h1M1017 595.5h1M1017 618.5h1M1017 641.5h1M1017 664.5h1M1017 687.5h1M1017 711.5h1M1017 734.5h1M1017 759.5h1M1017 782.5h1M1017 805.5h1M1017 829.5h1M1017 852.5h1M1017 875.5h1M1017 898.5h1M1017 921.5h1M1017 945.5h1M1017 968.5h1M1052 57.5h1M1052 80.5h1M1052 103.5h1M1052 127.5h1M1052 150.5h1M1052 173.5h1M1052 196.5h1M1052 219.5h1M1052 243.5h1M1052 266.5h1M1052 291.5h1M1052 314.5h1M1052 337.5h1M1052 361.5h1M1052 384.5h1M1052 407.5h1M1052 430.5h1M1052 453.5h1M1052 477.5h1M1052 500.5h1M1052 525.5h1M1052 548.5h1M1052 571.5h1M1052 595.5h1M1052 618.5h1M1052 641.5h1M1052 664.5h1M1052 687.5h1M1052 711.5h1M1052 734.5h1M1052 759.5h1M1052 782.5h1M1052 805.5h1M1052 829.5h1M1052 852.5h1M1052 875.5h1M1052 898.5h1M1052 921.5h1M1052 945.5h1M1052 968.5h1M1087 57.5h1M1087 80.5h1M1087 103.5h1M1087 127.5h1M1087 150.5h1M1087 173.5h1M1087 196.5h1M1087 219.5h1M1087 243.5h1M1087 266.5h1M1087 291.5h1M1087 314.5h1M1087 337.5h1M1087 361.5h1M1087 384.5h1M1087 407.5h1M1087 430.5h1M1087 453.5h1M1087 477.5h1M1087 500.5h1M1087 525.5h1M1087 548.5h1M1087 571.5h1M1087 595.5h1M1087 618.5h1M1087 641.5h1M1087 664.5h1M1087 687.5h1M1087 711.5h1M1087 734.5h1M1087 759.5h1M1087 782.5h1M1087 805.5h1M1087 829.5h1M1087 852.5h1M1087 875.5h1M1087 898.5h1M1087 921.5h1M1087 945.5h1M1087 968.5h1M1122 57.5h1M1122 80.5h1M1122 103.5h1M1122 127.5h1M1122 150.5h1M1122 173.5h1M1122 196.5h1M1122 219.5h1M1122 243.5h1M1122 266.5h1M1122 291.5h1M1122 314.5h1M1122 337.5h1M1122 361.5h1M1122 384.5h1M1122 407.5h1M1122 430.5h1M1122 453.5h1M1122 477.5h1M1122 500.5h1M1122 525.5h1M1122 548.5h1M1122 571.5h1M1122 595.5h1M1122 618.5h1M1122 641.5h1M1122 664.5h1M1122 687.5h1M1122 711.5h1M1122 734.5h1M1122 759.5h1M1122 782.5h1M1122 805.5h1M1122 829.5h1M1122 852.5h1M1122 875.5h1M1122 898.5h1M1122 921.5h1M1122 945.5h1M1122 968.5h1M1157 57.5h1M1157 62.5h1M1157 66.5h1M1157 71.5h1M1157 76.5h1M1157 80.5h1M1157 85.5h1M1157 90.5h1M1157 94.5h1M1157 99.5h1M1157 103.5h1M1157 104.5h1M1157 108.5h1M1157 113.5h1M1157 118.5h1M1157 122.5h1M1157 127.5h1M1157 132.5h1M1157 136.5h1M1157 141.5h1M1157 146.5h1M1157 150.5h1M1157 155.5h1M1157 160.5h1M1157 164.5h1M1157 169.5h1M1157 173.5h1M1157 174.5h1M1157 178.5h1M1157 183.5h1M1157 188.5h1M1157 192.5h1M1157 196.5h1M1157 197.5h1M1157 202.5h1M1157 206.5h1M1157 211.5h1M1157 216.5h1M1157 219.5h1M1157 220.5h1M1157 225.5h1M1157 230.5h1M1157 234.5h1M1157 239.5h1M1157 243.5h1M1157 244.5h1M1157 248.5h1M1157 253.5h1M1157 258.5h1M1157 262.5h1M1157 266.5h1M1157 267.5h1M1157 272.5h1M1157 276.5h1M1157 281.5h1M1157 286.5h1M1157 291.5h1M1157 296.5h1M1157 300.5h1M1157 305.5h1M1157 310.5h1M1157 314.5h1M1157 319.5h1M1157 324.5h1M1157 328.5h1M1157 333.5h1M1157 337.5h1M1157 338.5h1M1157 342.5h1M1157 347.5h1M1157 352.5h1M1157 356.5h1M1157 361.5h1M1157 366.5h1M1157 370.5h1M1157 375.5h1M1157 380.5h1M1157 384.5h1M1157 389.5h1M1157 394.5h1M1157 398.5h1M1157 403.5h1M1157 407.5h1M1157 408.5h1M1157 412.5h1M1157 417.5h1M1157 422.5h1M1157 426.5h1M1157 430.5h1M1157 431.5h1M1157 436.5h1M1157 440.5h1M1157 445.5h1M1157 450.5h1M1157 453.5h1M1157 454.5h1M1157 459.5h1M1157 464.5h1M1157 468.5h1M1157 473.5h1M1157 477.5h1M1157 478.5h1M1157 482.5h1M1157 487.5h1M1157 492.5h1M1157 496.5h1M1157 500.5h1M1157 501.5h1M1157 506.5h1M1157 510.5h1M1157 515.5h1M1157 520.5h1M1157 525.5h1M1157 530.5h1M1157 534.5h1M1157 539.5h1M1157 544.5h1M1157 548.5h1M1157 553.5h1M1157 558.5h1M1157 562.5h1M1157 567.5h1M1157 571.5h1M1157 572.5h1M1157 576.5h1M1157 581.5h1M1157 586.5h1M1157 590.5h1M1157 595.5h1M1157 600.5h1M1157 604.5h1M1157 609.5h1M1157 614.5h1M1157 618.5h1M1157 623.5h1M1157 628.5h1M1157 632.5h1M1157 637.5h1M1157 641.5h1M1157 642.5h1M1157 646.5h1M1157 651.5h1M1157 656.5h1M1157 660.5h1M1157 664.5h1M1157 665.5h1M1157 670.5h1M1157 674.5h1M1157 679.5h1M1157 684.5h1M1157 687.5h1M1157 688.5h1M1157 693.5h1M1157 698.5h1M1157 702.5h1M1157 707.5h1M1157 711.5h1M1157 712.5h1M1157 716.5h1M1157 721.5h1M1157 726.5h1M1157 730.5h1M1157 734.5h1M1157 735.5h1M1157 740.5h1M1157 744.5h1M1157 749.5h1M1157 754.5h1M1157 759.5h1M1157 764.5h1M1157 768.5h1M1157 773.5h1M1157 778.5h1M1157 782.5h1M1157 787.5h1M1157 792.5h1M1157 796.5h1M1157 801.5h1M1157 805.5h1M1157 806.5h1M1157 810.5h1M1157 815.5h1M1157 820.5h1M1157 824.5h1M1157 829.5h1M1157 834.5h1M1157 838.5h1M1157 843.5h1M1157 848.5h1M1157 852.5h1M1157 857.5h1M1157 862.5h1M1157 866.5h1M1157 871.5h1M1157 875.5h1M1157 876.5h1M1157 880.5h1M1157 885.5h1M1157 890.5h1M1157 894.5h1M1157 898.5h1M1157 899.5h1M1157 904.5h1M1157 908.5h1M1157 913.5h1M1157 918.5h1M1157 921.5h1M1157 922.5h1M1157 927.5h1M1157 932.5h1M1157 936.5h1M1157 941.5h1M1157 945.5h1M1157 946.5h1M1157 950.5h1M1157 955.5h1M1157 960.5h1M1157 964.5h1M1157 968.5h1M1157 969.5h1M1157 974.5h1M1157 978.5h1M1157 983.5h1M1157 988.5h1M1192 57.5h1M1192 80.5h1M1192 103.5h1M1192 127.5h1M1192 150.5h1M1192 173.5h1M1192 196.5h1M1192 219.5h1M1192 243.5h1M1192 266.5h1M1192 291.5h1M1192 314.5h1M1192 337.5h1M1192 361.5h1M1192 384.5h1M1192 407.5h1M1192 430.5h1M1192 453.5h1M1192 477.5h1M1192 500.5h1M1192 525.5h1M1192 548.5h1M1192 571.5h1M1192 595.5h1M1192 618.5h1M1192 641.5h1M1192 664.5h1M1192 687.5h1M1192 711.5h1M1192 734.5h1M1192 759.5h1M1192 782.5h1M1192 805.5h1M1192 829.5h1M1192 852.5h1M1192 875.5h1M1192 898.5h1M1192 921.5h1M1192 945.5h1M1192 968.5h1M1226 57.5h1M1226 80.5h1M1226 103.5h1M1226 127.5h1M1226 150.5h1M1226 173.5h1M1226 196.5h1M1226 219.5h1M1226 243.5h1M1226 266.5h1M1226 291.5h1M1226 314.5h1M1226 337.5h1M1226 361.5h1M1226 384.5h1M1226 407.5h1M1226 430.5h1M1226 453.5h1M1226 477.5h1M1226 500.5h1M1226 525.5h1M1226 548.5h1M1226 571.5h1M1226 595.5h1M1226 618.5h1M1226 641.5h1M1226 664.5h1M1226 687.5h1M1226 711.5h1M1226 734.5h1M1226 759.5h1M1226 782.5h1M1226 805.5h1M1226 829.5h1M1226 852.5h1M1226 875.5h1M1226 898.5h1M1226 921.5h1M1226 945.5h1M1226 968.5h1M1261 57.5h1M1261 80.5h1M1261 103.5h1M1261 127.5h1M1261 150.5h1M1261 173.5h1M1261 196.5h1M1261 219.5h1M1261 243.5h1M1261 266.5h1M1261 291.5h1M1261 314.5h1M1261 337.5h1M1261 361.5h1M1261 384.5h1M1261 407.5h1M1261 430.5h1M1261 453.5h1M1261 477.5h1M1261 500.5h1M1261 525.5h1M1261 548.5h1M1261 571.5h1M1261 595.5h1M1261 618.5h1M1261 641.5h1M1261 664.5h1M1261 687.5h1M1261 711.5h1M1261 734.5h1M1261 759.5h1M1261 782.5h1M1261 805.5h1M1261 829.5h1M1261 852.5h1M1261 875.5h1M1261 898.5h1M1261 921.5h1M1261 945.5h1M1261 968.5h1M1296 57.5h1M1296 80.5h1M1296 103.5h1M1296 127.5h1M1296 150.5h1M1296 173.5h1M1296 196.5h1M1296 219.5h1M1296 243.5h1M1296 266.5h1M1296 291.5h1M1296 314.5h1M1296 337.5h1M1296 361.5h1M1296 384.5h1M1296 407.5h1M1296 430.5h1M1296 453.5h1M1296 477.5h1M1296 500.5h1M1296 525.5h1M1296 548.5h1M1296 571.5h1M1296 595.5h1M1296 618.5h1M1296 641.5h1M1296 664.5h1M1296 687.5h1M1296 711.5h1M1296 734.5h1M1296 759.5h1M1296 782.5h1M1296 805.5h1M1296 829.5h1M1296 852.5h1M1296 875.5h1M1296 898.5h1M1296 921.5h1M1296 945.5h1M1296 968.5h1M1331 57.5h1M1331 62.5h1M1331 66.5h1M1331 71.5h1M1331 76.5h1M1331 80.5h1M1331 85.5h1M1331 90.5h1M1331 94.5h1M1331 99.5h1M1331 103.5h1M1331 104.5h1M1331 108.5h1M1331 113.5h1M1331 118.5h1M1331 122.5h1M1331 127.5h1M1331 132.5h1M1331 136.5h1M1331 141.5h1M1331 146.5h1M1331 150.5h1M1331 155.5h1M1331 160.5h1M1331 164.5h1M1331 169.5h1M1331 173.5h1M1331 174.5h1M1331 178.5h1M1331 183.5h1M1331 188.5h1M1331 192.5h1M1331 196.5h1M1331 197.5h1M1331 202.5h1M1331 206.5h1M1331 211.5h1M1331 216.5h1M1331 219.5h1M1331 220.5h1M1331 225.5h1M1331 230.5h1M1331 234.5h1M1331 239.5h1M1331 243.5h1M1331 244.5h1M1331 248.5h1M1331 253.5h1M1331 258.5h1M1331 262.5h1M1331 266.5h1M1331 267.5h1M1331 272.5h1M1331 276.5h1M1331 281.5h1M1331 286.5h1M1331 291.5h1M1331 296.5h1M1331 300.5h1M1331 305.5h1M1331 310.5h1M1331 314.5h1M1331 319.5h1M1331 324.5h1M1331 328.5h1M1331 333.5h1M1331 337.5h1M1331 338.5h1M1331 342.5h1M1331 347.5h1M1331 352.5h1M1331 356.5h1M1331 361.5h1M1331 366.5h1M1331 370.5h1M1331 375.5h1M1331 380.5h1M1331 384.5h1M1331 389.5h1M1331 394.5h1M1331 398.5h1M1331 403.5h1M1331 407.5h1M1331 408.5h1M1331 412.5h1M1331 417.5h1M1331 422.5h1M1331 426.5h1M1331 430.5h1M1331 431.5h1M1331 436.5h1M1331 440.5h1M1331 445.5h1M1331 450.5h1M1331 453.5h1M1331 454.5h1M1331 459.5h1M1331 464.5h1M1331 468.5h1M1331 473.5h1M1331 477.5h1M1331 478.5h1M1331 482.5h1M1331 487.5h1M1331 492.5h1M1331 496.5h1M1331 500.5h1M1331 501.5h1M1331 506.5h1M1331 510.5h1M1331 515.5h1M1331 520.5h1M1331 525.5h1M1331 530.5h1M1331 534.5h1M1331 539.5h1M1331 544.5h1M1331 548.5h1M1331 553.5h1M1331 558.5h1M1331 562.5h1M1331 567.5h1M1331 571.5h1M1331 572.5h1M1331 576.5h1M1331 581.5h1M1331 586.5h1M1331 590.5h1M1331 595.5h1M1331 600.5h1M1331 604.5h1M1331 609.5h1M1331 614.5h1M1331 618.5h1M1331 623.5h1M1331 628.5h1M1331 632.5h1M1331 637.5h1M1331 641.5h1M1331 642.5h1M1331 646.5h1M1331 651.5h1M1331 656.5h1M1331 660.5h1M1331 664.5h1M1331 665.5h1M1331 670.5h1M1331 674.5h1M1331 679.5h1M1331 684.5h1M1331 687.5h1M1331 688.5h1M1331 693.5h1M1331 698.5h1M1331 702.5h1M1331 707.5h1M1331 711.5h1M1331 712.5h1M1331 716.5h1M1331 721.5h1M1331 726.5h1M1331 730.5h1M1331 734.5h1M1331 735.5h1M1331 740.5h1M1331 744.5h1M1331 749.5h1M1331 754.5h1M1331 759.5h1M1331 764.5h1M1331 768.5h1M1331 773.5h1M1331 778.5h1M1331 782.5h1M1331 787.5h1M1331 792.5h1M1331 796.5h1M1331 801.5h1M1331 805.5h1M1331 806.5h1M1331 810.5h1M1331 815.5h1M1331 820.5h1M1331 824.5h1M1331 829.5h1M1331 834.5h1M1331 838.5h1M1331 843.5h1M1331 848.5h1M1331 852.5h1M1331 857.5h1M1331 862.5h1M1331 866.5h1M1331 871.5h1M1331 875.5h1M1331 876.5h1M1331 880.5h1M1331 885.5h1M1331 890.5h1M1331 894.5h1M1331 898.5h1M1331 899.5h1M1331 904.5h1M1331 908.5h1M1331 913.5h1M1331 918.5h1M1331 921.5h1M1331 922.5h1M1331 927.5h1M1331 932.5h1M1331 936.5h1M1331 941.5h1M1331 945.5h1M1331 946.5h1M1331 950.5h1M1331 955.5h1M1331 960.5h1M1331 964.5h1M1331 968.5h1M1331 969.5h1M1331 974.5h1M1331 978.5h1M1331 983.5h1M1331 988.5h1M1366 57.5h1M1366 80.5h1M1366 103.5h1M1366 127.5h1M1366 150.5h1M1366 173.5h1M1366 196.5h1M1366 219.5h1M1366 243.5h1M1366 266.5h1M1366 291.5h1M1366 314.5h1M1366 337.5h1M1366 361.5h1M1366 384.5h1M1366 407.5h1M1366 430.5h1M1366 453.5h1M1366 477.5h1M1366 500.5h1M1366 525.5h1M1366 548.5h1M1366 571.5h1M1366 595.5h1M1366 618.5h1M1366 641.5h1M1366 664.5h1M1366 687.5h1M1366 711.5h1M1366 734.5h1M1366 759.5h1M1366 782.5h1M1366 805.5h1M1366 829.5h1M1366 852.5h1M1366 875.5h1M1366 898.5h1M1366 921.5h1M1366 945.5h1M1366 968.5h1M1401 57.5h1M1401 80.5h1M1401 103.5h1M1401 127.5h1M1401 150.5h1M1401 173.5h1M1401 196.5h1M1401 219.5h1M1401 243.5h1M1401 266.5h1M1401 291.5h1M1401 314.5h1M1401 337.5h1M1401 361.5h1M1401 384.5h1M1401 407.5h1M1401 430.5h1M1401 453.5h1M1401 477.5h1M1401 500.5h1M1401 525.5h1M1401 548.5h1M1401 571.5h1M1401 595.5h1M1401 618.5h1M1401 641.5h1M1401 664.5h1M1401 687.5h1M1401 711.5h1M1401 734.5h1M1401 759.5h1M1401 782.5h1M1401 805.5h1M1401 829.5h1M1401 852.5h1M1401 875.5h1M1401 898.5h1M1401 921.5h1M1401 945.5h1M1401 968.5h1M1436 57.5h1M1436 80.5h1M1436 103.5h1M1436 127.5h1M1436 150.5h1M1436 173.5h1M1436 196.5h1M1436 219.5h1M1436 243.5h1M1436 266.5h1M1436 291.5h1M1436 314.5h1M1436 337.5h1M1436 361.5h1M1436 384.5h1M1436 407.5h1M1436 430.5h1M1436 453.5h1M1436 477.5h1M1436 500.5h1M1436 525.5h1M1436 548.5h1M1436 571.5h1M1436 595.5h1M1436 618.5h1M1436 641.5h1M1436 664.5h1M1436 687.5h1M1436 711.5h1M1436 734.5h1M1436 759.5h1M1436 782.5h1M1436 805.5h1M1436 829.5h1M1436 852.5h1M1436 875.5h1M1436 898.5h1M1436 921.5h1M1436 945.5h1M1436 968.5h1M1471 57.5h1M1471 80.5h1M1471 103.5h1M1471 127.5h1M1471 150.5h1M1471 173.5h1M1471 196.5h1M1471 219.5h1M1471 243.5h1M1471 266.5h1M1471 291.5h1M1471 314.5h1M1471 337.5h1M1471 361.5h1M1471 384.5h1M1471 407.5h1M1471 430.5h1M1471 453.5h1M1471 477.5h1M1471 500.5h1M1471 525.5h1M1471 548.5h1M1471 571.5h1M1471 595.5h1M1471 618.5h1M1471 641.5h1M1471 664.5h1M1471 687.5h1M1471 711.5h1M1471 734.5h1M1471 759.5h1M1471 782.5h1M1471 805.5h1M1471 829.5h1M1471 852.5h1M1471 875.5h1M1471 898.5h1M1471 921.5h1M1471 945.5h1M1471 968.5h1M1506 57.5h1M1506 62.5h1M1506 66.5h1M1506 71.5h1M1506 76.5h1M1506 80.5h1M1506 85.5h1M1506 90.5h1M1506 94.5h1M1506 99.5h1M1506 103.5h1M1506 104.5h1M1506 108.5h1M1506 113.5h1M1506 118.5h1M1506 122.5h1M1506 127.5h1M1506 132.5h1M1506 136.5h1M1506 141.5h1M1506 146.5h1M1506 150.5h1M1506 155.5h1M1506 160.5h1M1506 164.5h1M1506 169.5h1M1506 173.5h1M1506 174.5h1M1506 178.5h1M1506 183.5h1M1506 188.5h1M1506 192.5h1M1506 196.5h1M1506 197.5h1M1506 202.5h1M1506 206.5h1M1506 211.5h1M1506 216.5h1M1506 219.5h1M1506 220.5h1M1506 225.5h1M1506 230.5h1M1506 234.5h1M1506 239.5h1M1506 243.5h1M1506 244.5h1M1506 248.5h1M1506 253.5h1M1506 258.5h1M1506 262.5h1M1506 266.5h1M1506 267.5h1M1506 272.5h1M1506 276.5h1M1506 281.5h1M1506 286.5h1M1506 291.5h1M1506 296.5h1M1506 300.5h1M1506 305.5h1M1506 310.5h1M1506 314.5h1M1506 319.5h1M1506 324.5h1M1506 328.5h1M1506 333.5h1M1506 337.5h1M1506 338.5h1M1506 342.5h1M1506 347.5h1M1506 352.5h1M1506 356.5h1M1506 361.5h1M1506 366.5h1M1506 370.5h1M1506 375.5h1M1506 380.5h1M1506 384.5h1M1506 389.5h1M1506 394.5h1M1506 398.5h1M1506 403.5h1M1506 407.5h1M1506 408.5h1M1506 412.5h1M1506 417.5h1M1506 422.5h1M1506 426.5h1M1506 430.5h1M1506 431.5h1M1506 436.5h1M1506 440.5h1M1506 445.5h1M1506 450.5h1M1506 453.5h1M1506 454.5h1M1506 459.5h1M1506 464.5h1M1506 468.5h1M1506 473.5h1M1506 477.5h1M1506 478.5h1M1506 482.5h1M1506 487.5h1M1506 492.5h1M1506 496.5h1M1506 500.5h1M1506 501.5h1M1506 506.5h1M1506 510.5h1M1506 515.5h1M1506 520.5h1M1506 525.5h1M1506 530.5h1M1506 534.5h1M1506 539.5h1M1506 544.5h1M1506 548.5h1M1506 553.5h1M1506 558.5h1M1506 562.5h1M1506 567.5h1M1506 571.5h1M1506 572.5h1M1506 576.5h1M1506 581.5h1M1506 586.5h1M1506 590.5h1M1506 595.5h1M1506 600.5h1M1506 604.5h1M1506 609.5h1M1506 614.5h1M1506 618.5h1M1506 623.5h1M1506 628.5h1M1506 632.5h1M1506 637.5h1M1506 641.5h1M1506 642.5h1M1506 646.5h1M1506 651.5h1M1506 656.5h1M1506 660.5h1M1506 664.5h1M1506 665.5h1M1506 670.5h1M1506 674.5h1M1506 679.5h1M1506 684.5h1M1506 687.5h1M1506 688.5h1M1506 693.5h1M1506 698.5h1M1506 702.5h1M1506 707.5h1M1506 711.5h1M1506 712.5h1M1506 716.5h1M1506 721.5h1M1506 726.5h1M1506 730.5h1M1506 734.5h1M1506 735.5h1M1506 740.5h1M1506 744.5h1M1506 749.5h1M1506 754.5h1M1506 759.5h1M1506 764.5h1M1506 768.5h1M1506 773.5h1M1506 778.5h1M1506 782.5h1M1506 787.5h1M1506 792.5h1M1506 796.5h1M1506 801.5h1M1506 805.5h1M1506 806.5h1M1506 810.5h1M1506 815.5h1M1506 820.5h1M1506 824.5h1M1506 829.5h1M1506 834.5h1M1506 838.5h1M1506 843.5h1M1506 848.5h1M1506 852.5h1M1506 857.5h1M1506 862.5h1M1506 866.5h1M1506 871.5h1M1506 875.5h1M1506 876.5h1M1506 880.5h1M1506 885.5h1M1506 890.5h1M1506 894.5h1M1506 898.5h1M1506 899.5h1M1506 904.5h1M1506 908.5h1M1506 913.5h1M1506 918.5h1M1506 921.5h1M1506 922.5h1M1506 927.5h1M1506 932.5h1M1506 936.5h1M1506 941.5h1M1506 945.5h1M1506 946.5h1M1506 950.5h1M1506 955.5h1M1506 960.5h1M1506 964.5h1M1506 968.5h1M1506 969.5h1M1506 974.5h1M1506 978.5h1M1506 983.5h1M1506 988.5h1M1541 57.5h1M1541 80.5h1M1541 103.5h1M1541 127.5h1M1541 150.5h1M1541 173.5h1M1541 196.5h1M1541 219.5h1M1541 243.5h1M1541 266.5h1M1541 291.5h1M1541 314.5h1M1541 337.5h1M1541 361.5h1M1541 384.5h1M1541 407.5h1M1541 430.5h1M1541 453.5h1M1541 477.5h1M1541 500.5h1M1541 525.5h1M1541 548.5h1M1541 571.5h1M1541 595.5h1M1541 618.5h1M1541 641.5h1M1541 664.5h1M1541 687.5h1M1541 711.5h1M1541 734.5h1M1541 759.5h1M1541 782.5h1M1541 805.5h1M1541 829.5h1M1541 852.5h1M1541 875.5h1M1541 898.5h1M1541 921.5h1M1541 945.5h1M1541 968.5h1M1576 57.5h1M1576 80.5h1M1576 103.5h1M1576 127.5h1M1576 150.5h1M1576 173.5h1M1576 196.5h1M1576 219.5h1M1576 243.5h1M1576 266.5h1M1576 291.5h1M1576 314.5h1M1576 337.5h1M1576 361.5h1M1576 384.5h1M1576 407.5h1M1576 430.5h1M1576 453.5h1M1576 477.5h1M1576 500.5h1M1576 525.5h1M1576 548.5h1M1576 571.5h1M1576 595.5h1M1576 618.5h1M1576 641.5h1M1576 664.5h1M1576 687.5h1M1576 711.5h1M1576 734.5h1M1576 759.5h1M1576 782.5h1M1576 805.5h1M1576 829.5h1M1576 852.5h1M1576 875.5h1M1576 898.5h1M1576 921.5h1M1576 945.5h1M1576 968.5h1M1611 57.5h1M1611 80.5h1M1611 103.5h1M1611 127.5h1M1611 150.5h1M1611 173.5h1M1611 196.5h1M1611 219.5h1M1611 243.5h1M1611 266.5h1M1611 291.5h1M1611 314.5h1M1611 337.5h1M1611 361.5h1M1611 384.5h1M1611 407.5h1M1611 430.5h1M1611 453.5h1M1611 477.5h1M1611 500.5h1M1611 525.5h1M1611 548.5h1M1611 571.5h1M1611 595.5h1M1611 618.5h1M1611 641.5h1M1611 664.5h1M1611 687.5h1M1611 711.5h1M1611 734.5h1M1611 759.5h1M1611 782.5h1M1611 805.5h1M1611 829.5h1M1611 852.5h1M1611 875.5h1M1611 898.5h1M1611 921.5h1M1611 945.5h1M1611 968.5h1M1646 57.5h1M1646 80.5h1M1646 103.5h1M1646 127.5h1M1646 150.5h1M1646 173.5h1M1646 196.5h1M1646 219.5h1M1646 243.5h1M1646 266.5h1M1646 291.5h1M1646 314.5h1M1646 337.5h1M1646 361.5h1M1646 384.5h1M1646 407.5h1M1646 430.5h1M1646 453.5h1M1646 477.5h1M1646 500.5h1M1646 525.5h1M1646 548.5h1M1646 571.5h1M1646 595.5h1M1646 618.5h1M1646 641.5h1M1646 664.5h1M1646 687.5h1M1646 711.5h1M1646 734.5h1M1646 759.5h1M1646 782.5h1M1646 805.5h1M1646 829.5h1M1646 852.5h1M1646 875.5h1M1646 898.5h1M1646 921.5h1M1646 945.5h1M1646 968.5h1M1681 57.5h1M1681 62.5h1M1681 66.5h1M1681 71.5h1M1681 76.5h1M1681 80.5h1M1681 85.5h1M1681 90.5h1M1681 94.5h1M1681 99.5h1M1681 103.5h1M1681 104.5h1M1681 108.5h1M1681 113.5h1M1681 118.5h1M1681 122.5h1M1681 127.5h1M1681 132.5h1M1681 136.5h1M1681 141.5h1M1681 146.5h1M1681 150.5h1M1681 155.5h1M1681 160.5h1M1681 164.5h1M1681 169.5h1M1681 173.5h1M1681 174.5h1M1681 178.5h1M1681 183.5h1M1681 188.5h1M1681 192.5h1M1681 196.5h1M1681 197.5h1M1681 202.5h1M1681 206.5h1M1681 211.5h1M1681 216.5h1M1681 219.5h1M1681 220.5h1M1681 225.5h1M1681 230.5h1M1681 234.5h1M1681 239.5h1M1681 243.5h1M1681 244.5h1M1681 248.5h1M1681 253.5h1M1681 258.5h1M1681 262.5h1M1681 266.5h1M1681 267.5h1M1681 272.5h1M1681 276.5h1M1681 281.5h1M1681 286.5h1M1681 291.5h1M1681 296.5h1M1681 300.5h1M1681 305.5h1M1681 310.5h1M1681 314.5h1M1681 319.5h1M1681 324.5h1M1681 328.5h1M1681 333.5h1M1681 337.5h1M1681 338.5h1M1681 342.5h1M1681 347.5h1M1681 352.5h1M1681 356.5h1M1681 361.5h1M1681 366.5h1M1681 370.5h1M1681 375.5h1M1681 380.5h1M1681 384.5h1M1681 389.5h1M1681 394.5h1M1681 398.5h1M1681 403.5h1M1681 407.5h1M1681 408.5h1M1681 412.5h1M1681 417.5h1M1681 422.5h1M1681 426.5h1M1681 430.5h1M1681 431.5h1M1681 436.5h1M1681 440.5h1M1681 445.5h1M1681 450.5h1M1681 453.5h1M1681 454.5h1M1681 459.5h1M1681 464.5h1M1681 468.5h1M1681 473.5h1M1681 477.5h1M1681 478.5h1M1681 482.5h1M1681 487.5h1M1681 492.5h1M1681 496.5h1M1681 500.5h1M1681 501.5h1M1681 506.5h1M1681 510.5h1M1681 515.5h1M1681 520.5h1M1681 525.5h1M1681 530.5h1M1681 534.5h1M1681 539.5h1M1681 544.5h1M1681 548.5h1M1681 553.5h1M1681 558.5h1M1681 562.5h1M1681 567.5h1M1681 571.5h1M1681 572.5h1M1681 576.5h1M1681 581.5h1M1681 586.5h1M1681 590.5h1M1681 595.5h1M1681 600.5h1M1681 604.5h1M1681 609.5h1M1681 614.5h1M1681 618.5h1M1681 623.5h1M1681 628.5h1M1681 632.5h1M1681 637.5h1M1681 641.5h1M1681 642.5h1M1681 646.5h1M1681 651.5h1M1681 656.5h1M1681 660.5h1M1681 664.5h1M1681 665.5h1M1681 670.5h1M1681 674.5h1M1681 679.5h1M1681 684.5h1M1681 687.5h1M1681 688.5h1M1681 693.5h1M1681 698.5h1M1681 702.5h1M1681 707.5h1M1681 711.5h1M1681 712.5h1M1681 716.5h1M1681 721.5h1M1681 726.5h1M1681 730.5h1M1681 734.5h1M1681 735.5h1M1681 740.5h1M1681 744.5h1M1681 749.5h1M1681 754.5h1M1681 759.5h1M1681 764.5h1M1681 768.5h1M1681 773.5h1M1681 778.5h1M1681 782.5h1M1681 787.5h1M1681 792.5h1M1681 796.5h1M1681 801.5h1M1681 805.5h1M1681 806.5h1M1681 810.5h1M1681 815.5h1M1681 820.5h1M1681 824.5h1M1681 829.5h1M1681 834.5h1M1681 838.5h1M1681 843.5h1M1681 848.5h1M1681 852.5h1M1681 857.5h1M1681 862.5h1M1681 866.5h1M1681 871.5h1M1681 875.5h1M1681 876.5h1M1681 880.5h1M1681 885.5h1M1681 890.5h1M1681 894.5h1M1681 898.5h1M1681 899.5h1M1681 904.5h1M1681 908.5h1M1681 913.5h1M1681 918.5h1M1681 921.5h1M1681 922.5h1M1681 927.5h1M1681 932.5h1M1681 936.5h1M1681 941.5h1M1681 945.5h1M1681 946.5h1M1681 950.5h1M1681 955.5h1M1681 960.5h1M1681 964.5h1M1681 968.5h1M1681 969.5h1M1681 974.5h1M1681 978.5h1M1681 983.5h1M1681 988.5h1M1716 57.5h1M1716 80.5h1M1716 103.5h1M1716 127.5h1M1716 150.5h1M1716 173.5h1M1716 196.5h1M1716 219.5h1M1716 243.5h1M1716 266.5h1M1716 291.5h1M1716 314.5h1M1716 337.5h1M1716 361.5h1M1716 384.5h1M1716 407.5h1M1716 430.5h1M1716 453.5h1M1716 477.5h1M1716 500.5h1M1716 525.5h1M1716 548.5h1M1716 571.5h1M1716 595.5h1M1716 618.5h1M1716 641.5h1M1716 664.5h1M1716 687.5h1M1716 711.5h1M1716 734.5h1M1716 759.5h1M1716 782.5h1M1716 805.5h1M1716 829.5h1M1716 852.5h1M1716 875.5h1M1716 898.5h1M1716 921.5h1M1716 945.5h1M1716 968.5h1" stroke="#b4b4b4" stroke-width="1" fill="none"/>
<rect x="3" y="289" width="1748" height="2" fill="#7c7c7c"/>
<rect x="3" y="523" width="1748" height="2" fill="#7c7c7c"/>
<rect x="3" y="757" width="1748" height="2" fill="#7c7c7c"/>
<line x1="6" y1="173.5" x2="1751" y2="173.5" stroke="#a9a9a9" stroke-width="1" stroke-dasharray="5 5"/>
<line x1="6" y1="407.5" x2="1751" y2="407.5" stroke="#a9a9a9" stroke-width="1" stroke-dasharray="5 5"/>
<line x1="6" y1="641.5" x2="1751" y2="641.5" stroke="#a9a9a9" stroke-width="1" stroke-dasharray="5 5"/>
<line x1="6" y1="875.5" x2="1751" y2="875.5" stroke="#a9a9a9" stroke-width="1" stroke-dasharray="5 5"/>
<line x1="108.5" y1="101" x2="108.5" y2="289" stroke="#c8c8c8" stroke-width="1" stroke-dasharray="5 5"/>
<line x1="108.5" y1="295" x2="108.5" y2="523" stroke="#c8c8c8" stroke-width="1" stroke-dasharray="5 5"/>
<line x1="108.5" y1="529" x2="108.5" y2="757" stroke="#c8c8c8" stroke-width="1" stroke-dasharray="5 5"/>
<line x1="108.5" y1="763" x2="108.5" y2="991" stroke="#c8c8c8" stroke-width="1" stroke-dasharray="5 5"/>
<text x="108.5" y="750.5" font-size="13" fill="#b8b8b8" text-anchor="middle">0 s</text>
<rect x="268.2" y="741" width="30.2" height="12" fill="#000"/>
<text x="283.3" y="750.5" font-size="13" fill="#b8b8b8" text-anchor="middle">4 ms</text>
<rect x="443.0" y="741" width="30.2" height="12" fill="#000"/>
<text x="458.1" y="750.5" font-size="13" fill="#b8b8b8" text-anchor="middle">8 ms</text>
<rect x="614.2" y="741" width="37.4" height="12" fill="#000"/>
<text x="632.9" y="750.5" font-size="13" fill="#b8b8b8" text-anchor="middle">12 ms</text>
<rect x="788.9" y="741" width="37.4" height="12" fill="#000"/>
<text x="807.6" y="750.5" font-size="13" fill="#b8b8b8" text-anchor="middle">16 ms</text>
<rect x="963.7" y="741" width="37.4" height="12" fill="#000"/>
<text x="982.4" y="750.5" font-size="13" fill="#b8b8b8" text-anchor="middle">20 ms</text>
<rect x="1138.5" y="741" width="37.4" height="12" fill="#000"/>
<text x="1157.2" y="750.5" font-size="13" fill="#b8b8b8" text-anchor="middle">24 ms</text>
<rect x="1313.3" y="741" width="37.4" height="12" fill="#000"/>
<text x="1332.0" y="750.5" font-size="13" fill="#b8b8b8" text-anchor="middle">28 ms</text>
<rect x="1488.1" y="741" width="37.4" height="12" fill="#000"/>
<text x="1506.8" y="750.5" font-size="13" fill="#b8b8b8" text-anchor="middle">32 ms</text>
<rect x="1662.9" y="741" width="37.4" height="12" fill="#000"/>
<text x="1681.6" y="750.5" font-size="13" fill="#b8b8b8" text-anchor="middle">36 ms</text>
<rect x="1714.1" y="97.9" width="32.4" height="11" fill="#000"/>
<text x="1745.5" y="108.3" font-size="13.4" fill="#e6e21a" text-anchor="end">1.5 V</text>
<rect x="1725.0" y="121.1" width="21.5" height="11" fill="#000"/>
<text x="1745.5" y="131.5" font-size="13.4" fill="#e6e21a" text-anchor="end">1 V</text>
<rect x="1699.7" y="144.3" width="46.8" height="11" fill="#000"/>
<text x="1745.5" y="154.7" font-size="13.4" fill="#e6e21a" text-anchor="end">500 mV</text>
<rect x="1725.0" y="167.5" width="21.5" height="11" fill="#000"/>
<text x="1745.5" y="177.9" font-size="13.4" fill="#e6e21a" text-anchor="end">0 V</text>
<rect x="1695.4" y="190.7" width="51.1" height="11" fill="#000"/>
<text x="1745.5" y="201.1" font-size="13.4" fill="#e6e21a" text-anchor="end">-500 mV</text>
<rect x="1720.7" y="213.9" width="25.8" height="11" fill="#000"/>
<text x="1745.5" y="224.3" font-size="13.4" fill="#e6e21a" text-anchor="end">-1 V</text>
<rect x="1709.8" y="237.1" width="36.7" height="11" fill="#000"/>
<text x="1745.5" y="247.5" font-size="13.4" fill="#e6e21a" text-anchor="end">-1.5 V</text>
<rect x="1720.7" y="260.3" width="25.8" height="11" fill="#000"/>
<text x="1745.5" y="270.7" font-size="13.4" fill="#e6e21a" text-anchor="end">-2 V</text>
<rect x="1725.0" y="308.7" width="21.5" height="11" fill="#000"/>
<text x="1745.5" y="319.1" font-size="13.4" fill="#20c4d4" text-anchor="end">2 V</text>
<rect x="1714.1" y="331.9" width="32.4" height="11" fill="#000"/>
<text x="1745.5" y="342.3" font-size="13.4" fill="#20c4d4" text-anchor="end">1.5 V</text>
<rect x="1725.0" y="355.1" width="21.5" height="11" fill="#000"/>
<text x="1745.5" y="365.5" font-size="13.4" fill="#20c4d4" text-anchor="end">1 V</text>
<rect x="1699.7" y="378.3" width="46.8" height="11" fill="#000"/>
<text x="1745.5" y="388.7" font-size="13.4" fill="#20c4d4" text-anchor="end">500 mV</text>
<rect x="1725.0" y="401.5" width="21.5" height="11" fill="#000"/>
<text x="1745.5" y="411.9" font-size="13.4" fill="#20c4d4" text-anchor="end">0 V</text>
<rect x="1695.4" y="424.7" width="51.1" height="11" fill="#000"/>
<text x="1745.5" y="435.1" font-size="13.4" fill="#20c4d4" text-anchor="end">-500 mV</text>
<rect x="1720.7" y="447.9" width="25.8" height="11" fill="#000"/>
<text x="1745.5" y="458.3" font-size="13.4" fill="#20c4d4" text-anchor="end">-1 V</text>
<rect x="1709.8" y="471.1" width="36.7" height="11" fill="#000"/>
<text x="1745.5" y="481.5" font-size="13.4" fill="#20c4d4" text-anchor="end">-1.5 V</text>
<rect x="1720.7" y="494.3" width="25.8" height="11" fill="#000"/>
<text x="1745.5" y="504.7" font-size="13.4" fill="#20c4d4" text-anchor="end">-2 V</text>
<rect x="1725.0" y="542.7" width="21.5" height="11" fill="#000"/>
<text x="1745.5" y="553.1" font-size="13.4" fill="#e23c5a" text-anchor="end">2 V</text>
<rect x="1714.1" y="565.9" width="32.4" height="11" fill="#000"/>
<text x="1745.5" y="576.3" font-size="13.4" fill="#e23c5a" text-anchor="end">1.5 V</text>
<rect x="1725.0" y="589.1" width="21.5" height="11" fill="#000"/>
<text x="1745.5" y="599.5" font-size="13.4" fill="#e23c5a" text-anchor="end">1 V</text>
<rect x="1699.7" y="612.3" width="46.8" height="11" fill="#000"/>
<text x="1745.5" y="622.7" font-size="13.4" fill="#e23c5a" text-anchor="end">500 mV</text>
<rect x="1725.0" y="635.5" width="21.5" height="11" fill="#000"/>
<text x="1745.5" y="645.9" font-size="13.4" fill="#e23c5a" text-anchor="end">0 V</text>
<rect x="1695.4" y="658.7" width="51.1" height="11" fill="#000"/>
<text x="1745.5" y="669.1" font-size="13.4" fill="#e23c5a" text-anchor="end">-500 mV</text>
<rect x="1720.7" y="681.9" width="25.8" height="11" fill="#000"/>
<text x="1745.5" y="692.3" font-size="13.4" fill="#e23c5a" text-anchor="end">-1 V</text>
<rect x="1709.8" y="705.1" width="36.7" height="11" fill="#000"/>
<text x="1745.5" y="715.5" font-size="13.4" fill="#e23c5a" text-anchor="end">-1.5 V</text>
<rect x="1720.7" y="728.3" width="25.8" height="11" fill="#000"/>
<text x="1745.5" y="738.7" font-size="13.4" fill="#e23c5a" text-anchor="end">-2 V</text>
<rect x="1725.0" y="776.7" width="21.5" height="11" fill="#000"/>
<text x="1745.5" y="787.1" font-size="13.4" fill="#88c42e" text-anchor="end">2 V</text>
<rect x="1714.1" y="799.9" width="32.4" height="11" fill="#000"/>
<text x="1745.5" y="810.3" font-size="13.4" fill="#88c42e" text-anchor="end">1.5 V</text>
<rect x="1725.0" y="823.1" width="21.5" height="11" fill="#000"/>
<text x="1745.5" y="833.5" font-size="13.4" fill="#88c42e" text-anchor="end">1 V</text>
<rect x="1699.7" y="846.3" width="46.8" height="11" fill="#000"/>
<text x="1745.5" y="856.7" font-size="13.4" fill="#88c42e" text-anchor="end">500 mV</text>
<rect x="1725.0" y="869.5" width="21.5" height="11" fill="#000"/>
<text x="1745.5" y="879.9" font-size="13.4" fill="#88c42e" text-anchor="end">0 V</text>
<rect x="1695.4" y="892.7" width="51.1" height="11" fill="#000"/>
<text x="1745.5" y="903.1" font-size="13.4" fill="#88c42e" text-anchor="end">-500 mV</text>
<rect x="1720.7" y="915.9" width="25.8" height="11" fill="#000"/>
<text x="1745.5" y="926.3" font-size="13.4" fill="#88c42e" text-anchor="end">-1 V</text>
<rect x="1709.8" y="939.1" width="36.7" height="11" fill="#000"/>
<text x="1745.5" y="949.5" font-size="13.4" fill="#88c42e" text-anchor="end">-1.5 V</text>
<rect x="1720.7" y="962.3" width="25.8" height="11" fill="#000"/>
<text x="1745.5" y="972.7" font-size="13.4" fill="#88c42e" text-anchor="end">-2 V</text>
<path d="M1710.5 64H1741Q1744 64 1744 67V97.5Z" fill="#545454"/>
<circle cx="1737" cy="70.5" r="4" stroke="#a9a9a9" stroke-width="1.6" fill="none"/>
<path d="M1728 79.5L1733.8 73.8" stroke="#a9a9a9" stroke-width="2.4" stroke-linecap="round"/>
<path d="M3 172h201v2h-201zM204 172h3v3h-3zM207 173h1v2h-1zM208 173h1v3h-1zM209 174h2v2h-2zM211 173h4v3h-4zM215 174h2v3h-2zM217 174h1v2h-1zM218 174h2v4h-2zM220 173h3v3h-3zM223 173h3v2h-3zM226 172h1v3h-1zM227 172h1v4h-1zM228 173h1v3h-1zM229 172h1v3h-1zM230 171h1v4h-1zM231 173h1v2h-1zM232 172h1v3h-1zM233 173h1v2h-1zM234 172h1v3h-1zM235 171h1v3h-1zM236 171h1v4h-1zM237 173h1v2h-1zM238 172h2v3h-2zM240 171h1v3h-1zM241 172h4v2h-4zM245 172h2v3h-2zM247 171h1v4h-1zM248 171h1v3h-1zM249 172h1v2h-1zM250 171h1v3h-1zM251 172h1v2h-1zM252 172h3v3h-3zM255 172h1v2h-1zM256 172h1v3h-1zM257 171h1v4h-1zM258 171h1v3h-1zM259 172h1v3h-1zM260 172h1v2h-1zM261 172h1v3h-1zM262 171h1v3h-1zM263 171h1v4h-1zM264 172h1v3h-1zM265 171h1v3h-1zM266 171h1v2h-1zM267 171h1v3h-1zM268 172h1v3h-1zM269 171h1v4h-1zM270 172h2v3h-2zM272 171h1v3h-1zM273 172h1v2h-1zM274 171h1v3h-1zM275 171h1v2h-1zM276 170h5v3h-5zM281 169h1v3h-1zM282 168h2v3h-2zM284 169h1v4h-1zM285 170h2v3h-2zM287 171h1v3h-1zM288 170h1v4h-1zM289 170h3v3h-3zM292 171h3v2h-3zM295 170h1v3h-1zM296 170h1v4h-1zM297 171h1v3h-1zM298 170h1v3h-1zM299 170h3v2h-3zM302 169h2v3h-2zM304 170h1v2h-1zM305 169h3v3h-3zM308 169h1v2h-1zM309 169h4v3h-4zM313 170h2v2h-2zM315 170h1v3h-1zM316 171h2v3h-2zM318 172h1v2h-1zM319 172h1v3h-1zM320 172h1v2h-1zM321 172h1v3h-1zM322 171h1v4h-1zM323 171h1v3h-1zM324 172h3v3h-3zM327 172h1v2h-1zM328 172h3v3h-3zM331 173h2v2h-2zM333 173h2v3h-2zM335 174h6v2h-6zM341 174h1v4h-1zM342 175h2v2h-2zM344 174h1v3h-1zM345 174h2v2h-2zM347 173h5v3h-5zM352 173h1v4h-1zM353 175h1v2h-1zM354 174h2v3h-2zM356 174h1v2h-1zM357 174h2v3h-2zM359 175h2v2h-2zM361 174h2v3h-2zM363 173h1v4h-1zM364 173h1v3h-1zM365 174h1v2h-1zM366 173h1v3h-1zM367 173h1v4h-1zM368 174h1v3h-1zM369 175h1v2h-1zM370 174h1v3h-1zM371 174h1v4h-1zM372 175h1v3h-1zM373 175h3v2h-3zM376 174h1v3h-1zM377 174h1v2h-1zM378 173h1v3h-1zM379 173h2v2h-2zM381 173h1v3h-1zM382 174h1v2h-1zM383 174h2v3h-2zM385 174h1v2h-1zM386 174h1v3h-1zM387 174h1v2h-1zM388 173h1v4h-1zM389 173h1v2h-1zM390 172h1v3h-1zM391 171h3v3h-3zM394 171h1v2h-1zM395 170h4v3h-4zM399 171h1v2h-1zM400 170h1v3h-1zM401 170h1v4h-1zM402 171h1v3h-1zM403 170h1v3h-1zM404 169h2v4h-2zM406 170h1v2h-1zM407 169h2v3h-2zM409 170h2v2h-2zM411 169h1v3h-1zM412 169h1v4h-1zM413 170h1v3h-1zM414 170h1v2h-1zM415 170h2v3h-2zM417 170h6v2h-6zM423 170h3v3h-3zM426 171h1v2h-1zM427 171h3v3h-3zM430 172h2v2h-2zM432 172h1v3h-1zM433 171h1v4h-1zM434 171h1v3h-1zM435 172h1v3h-1zM436 171h2v4h-2zM438 170h1v5h-1zM439 171h2v3h-2zM441 172h1v2h-1zM442 171h1v3h-1zM443 171h1v2h-1zM444 170h2v3h-2zM446 171h2v2h-2zM448 171h4v3h-4zM452 170h4v4h-4zM456 171h1v3h-1zM457 171h2v2h-2zM459 170h3v3h-3zM462 170h1v2h-1zM463 170h2v3h-2zM465 170h1v2h-1zM466 169h3v3h-3zM469 169h1v2h-1zM470 167h1v4h-1zM471 166h2v4h-2zM473 163h1v8h-1zM474 163h1v5h-1zM475 163h1v3h-1zM476 161h1v7h-1zM477 158h1v6h-1zM478 158h1v3h-1zM479 157h1v6h-1zM480 157h2v3h-2zM482 156h1v3h-1zM483 152h1v7h-1zM484 152h1v10h-1zM485 159h1v8h-1zM486 163h1v6h-1zM487 165h1v4h-1zM488 163h1v6h-1zM489 163h1v3h-1zM490 162h1v3h-1zM491 160h1v6h-1zM492 159h1v4h-1zM493 157h1v7h-1zM494 156h1v9h-1zM495 159h1v8h-1zM496 160h1v7h-1zM497 163h1v5h-1zM498 162h1v5h-1zM499 160h1v10h-1zM500 156h1v12h-1zM501 156h1v8h-1zM502 155h2v9h-2zM504 159h1v6h-1zM505 160h1v5h-1zM506 158h1v5h-1zM507 157h1v10h-1zM508 162h1v8h-1zM509 163h1v7h-1zM510 165h1v7h-1zM511 161h1v8h-1zM512 162h1v4h-1zM513 160h1v6h-1zM514 158h1v9h-1zM515 163h1v3h-1zM516 159h1v6h-1zM517 152h1v10h-1zM518 153h1v11h-1zM519 158h1v5h-1zM520 159h1v7h-1zM521 162h1v7h-1zM522 159h1v10h-1zM523 161h1v7h-1zM524 159h1v7h-1zM525 158h1v6h-1zM526 158h1v9h-1zM527 157h1v10h-1zM528 158h1v4h-1zM529 158h2v5h-2zM531 154h1v9h-1zM532 154h1v11h-1zM533 155h1v7h-1zM534 153h1v7h-1zM535 157h1v6h-1zM536 155h1v9h-1zM537 154h1v6h-1zM538 156h1v7h-1zM539 158h1v6h-1zM540 158h1v5h-1zM541 152h1v10h-1zM542 153h1v8h-1zM543 154h1v6h-1zM544 148h1v9h-1zM545 149h1v11h-1zM546 158h1v6h-1zM547 154h1v7h-1zM548 153h1v5h-1zM549 155h1v5h-1zM550 155h1v6h-1zM551 155h1v5h-1zM552 155h1v8h-1zM553 157h1v6h-1zM554 156h1v6h-1zM555 156h1v5h-1zM556 156h1v7h-1zM557 160h1v5h-1zM558 155h1v7h-1zM559 155h1v4h-1zM560 155h1v5h-1zM561 153h1v6h-1zM562 154h1v4h-1zM563 154h2v6h-2zM565 154h1v2h-1zM566 152h1v5h-1zM567 151h1v5h-1zM568 151h1v6h-1zM569 150h1v8h-1zM570 149h1v6h-1zM571 150h1v5h-1zM572 152h1v7h-1zM573 154h1v5h-1zM574 153h1v4h-1zM575 150h1v6h-1zM576 150h1v8h-1zM577 153h1v5h-1zM578 151h1v6h-1zM579 151h1v5h-1zM580 152h1v4h-1zM581 151h1v4h-1zM582 150h1v5h-1zM583 149h1v4h-1zM584 148h2v5h-2zM586 148h1v6h-1zM587 149h1v5h-1zM588 149h1v3h-1zM589 148h2v3h-2zM591 147h2v4h-2zM593 147h1v3h-1zM594 146h3v4h-3zM597 147h1v3h-1zM598 147h1v4h-1zM599 149h1v3h-1zM600 149h1v4h-1zM601 150h1v4h-1zM602 152h1v3h-1zM603 153h1v2h-1zM604 152h3v3h-3zM607 151h1v4h-1zM608 150h1v4h-1zM609 151h1v5h-1zM610 153h1v3h-1zM611 153h1v4h-1zM612 154h2v3h-2zM614 155h1v3h-1zM615 156h1v3h-1zM616 156h1v4h-1zM617 158h1v2h-1zM618 158h1v3h-1zM619 159h1v2h-1zM620 159h2v3h-2zM622 160h1v3h-1zM623 161h1v3h-1zM624 162h1v3h-1zM625 162h1v4h-1zM626 163h1v3h-1zM627 164h1v2h-1zM628 164h2v3h-2zM630 165h1v3h-1zM631 166h1v2h-1zM632 166h2v3h-2zM634 167h3v2h-3zM637 167h1v3h-1zM638 168h2v2h-2zM640 168h2v3h-2zM642 169h1v2h-1zM643 169h1v3h-1zM644 170h3v2h-3zM647 170h2v3h-2zM649 170h2v2h-2zM651 170h2v3h-2zM653 171h5v2h-5zM658 171h4v3h-4zM662 172h1089v2h-1089z" fill="#eeee10"/>
<path d="M3 407h200v1h-200zM203 407h6v2h-6zM209 408h1v2h-1zM210 407h2v2h-2zM212 408h1v1h-1zM213 407h1v3h-1zM214 407h1v2h-1zM215 408h2v1h-2zM217 407h1v2h-1zM218 407h1v4h-1zM219 408h1v2h-1zM220 407h1v2h-1zM221 407h1v1h-1zM222 407h2v2h-2zM224 408h1v1h-1zM225 407h3v2h-3zM228 407h1v1h-1zM229 407h6v2h-6zM235 407h3v1h-3zM238 406h2v3h-2zM240 407h1v2h-1zM241 407h3v1h-3zM244 407h1v2h-1zM245 406h1v3h-1zM246 406h7v2h-7zM253 405h4v2h-4zM257 406h2v1h-2zM259 406h4v2h-4zM263 406h1v1h-1zM264 406h2v2h-2zM266 406h1v1h-1zM267 406h1v2h-1zM268 407h1v1h-1zM269 406h2v2h-2zM271 405h3v2h-3zM274 404h2v2h-2zM276 405h2v1h-2zM278 404h1v2h-1zM279 403h1v3h-1zM280 403h1v2h-1zM281 404h1v3h-1zM282 403h1v4h-1zM283 403h1v3h-1zM284 405h1v2h-1zM285 406h2v1h-2zM287 406h2v2h-2zM289 406h1v3h-1zM290 407h1v2h-1zM291 407h1v1h-1zM292 405h1v3h-1zM293 405h2v1h-2zM295 405h2v2h-2zM297 405h3v1h-3zM300 404h1v2h-1zM301 403h6v2h-6zM307 404h1v1h-1zM308 404h2v2h-2zM310 404h1v3h-1zM311 406h2v1h-2zM313 405h2v2h-2zM315 405h1v3h-1zM316 406h4v2h-4zM320 407h1v2h-1zM321 406h1v3h-1zM322 406h1v2h-1zM323 407h2v2h-2zM325 408h1v1h-1zM326 408h2v2h-2zM328 408h1v1h-1zM329 407h3v2h-3zM332 408h1v1h-1zM333 408h2v2h-2zM335 408h1v1h-1zM336 408h2v2h-2zM338 408h1v1h-1zM339 407h4v2h-4zM343 408h1v1h-1zM344 408h4v2h-4zM348 409h1v1h-1zM349 408h1v2h-1zM350 409h2v1h-2zM352 408h3v2h-3zM355 408h1v1h-1zM356 407h3v2h-3zM359 407h1v3h-1zM360 409h1v1h-1zM361 408h1v2h-1zM362 408h1v1h-1zM363 408h1v2h-1zM364 409h5v1h-5zM369 408h1v2h-1zM370 408h1v1h-1zM371 408h1v3h-1zM372 409h1v2h-1zM373 408h1v3h-1zM374 408h1v1h-1zM375 408h1v2h-1zM376 409h1v1h-1zM377 407h1v3h-1zM378 407h6v2h-6zM384 407h1v1h-1zM385 407h1v2h-1zM386 406h2v3h-2zM388 407h6v2h-6zM394 407h1v1h-1zM395 406h5v2h-5zM400 405h1v2h-1zM401 406h2v2h-2zM403 405h4v2h-4zM407 404h2v2h-2zM409 405h2v1h-2zM411 404h2v2h-2zM413 403h1v3h-1zM414 403h2v2h-2zM416 404h1v2h-1zM417 405h1v1h-1zM418 405h2v2h-2zM420 404h1v2h-1zM421 404h1v3h-1zM422 405h1v2h-1zM423 405h1v1h-1zM424 405h4v2h-4zM428 406h1v1h-1zM429 405h1v2h-1zM430 405h1v1h-1zM431 404h2v2h-2zM433 405h2v1h-2zM435 405h3v2h-3zM438 405h4v1h-4zM442 405h2v2h-2zM444 404h1v2h-1zM445 405h6v2h-6zM451 406h2v1h-2zM453 405h4v2h-4zM457 405h1v1h-1zM458 405h2v2h-2zM460 404h2v2h-2zM462 405h2v1h-2zM464 404h4v2h-4zM468 403h2v3h-2zM470 403h1v2h-1zM471 401h1v4h-1zM472 401h1v2h-1zM473 400h1v3h-1zM474 398h1v4h-1zM475 397h1v2h-1zM476 395h1v3h-1zM477 393h1v5h-1zM478 394h1v2h-1zM479 390h1v7h-1zM480 391h2v2h-2zM482 390h1v3h-1zM483 390h1v4h-1zM484 392h1v5h-1zM485 393h1v7h-1zM486 396h1v7h-1zM487 398h1v6h-1zM488 401h1v4h-1zM489 402h1v2h-1zM490 399h1v7h-1zM491 399h1v3h-1zM492 395h1v6h-1zM493 393h1v4h-1zM494 394h1v4h-1zM495 392h1v6h-1zM496 392h1v7h-1zM497 394h1v8h-1zM498 397h1v4h-1zM499 396h1v3h-1zM500 388h1v12h-1zM501 392h1v5h-1zM502 393h1v6h-1zM503 396h1v10h-1zM504 399h1v6h-1zM505 395h1v8h-1zM506 394h1v6h-1zM507 395h1v5h-1zM508 394h1v7h-1zM509 396h1v6h-1zM510 395h1v4h-1zM511 396h1v2h-1zM512 395h2v6h-2zM514 394h1v9h-1zM515 394h1v7h-1zM516 387h1v9h-1zM517 387h1v7h-1zM518 392h1v5h-1zM519 391h1v6h-1zM520 392h1v6h-1zM521 394h1v6h-1zM522 396h1v4h-1zM523 395h1v5h-1zM524 395h1v3h-1zM525 387h1v10h-1zM526 389h1v3h-1zM527 390h1v9h-1zM528 393h1v5h-1zM529 393h1v3h-1zM530 392h1v8h-1zM531 388h1v11h-1zM532 387h1v11h-1zM533 395h1v2h-1zM534 394h1v4h-1zM535 395h1v2h-1zM536 393h1v7h-1zM537 395h1v7h-1zM538 395h1v3h-1zM539 391h1v9h-1zM540 391h1v4h-1zM541 392h1v4h-1zM542 393h1v5h-1zM543 392h1v6h-1zM544 391h1v6h-1zM545 385h1v9h-1zM546 387h1v8h-1zM547 391h1v6h-1zM548 390h1v3h-1zM549 391h1v3h-1zM550 391h1v4h-1zM551 389h1v8h-1zM552 392h2v4h-2zM554 391h1v3h-1zM555 391h1v4h-1zM556 387h1v7h-1zM557 389h1v4h-1zM558 392h1v2h-1zM559 392h1v3h-1zM560 386h2v8h-2zM562 391h1v4h-1zM563 392h1v4h-1zM564 391h1v5h-1zM565 391h2v2h-2zM567 390h1v3h-1zM568 390h1v1h-1zM569 389h1v3h-1zM570 389h2v5h-2zM572 389h1v2h-1zM573 388h1v4h-1zM574 388h1v3h-1zM575 389h1v2h-1zM576 388h1v3h-1zM577 385h1v5h-1zM578 386h1v2h-1zM579 387h1v3h-1zM580 387h1v4h-1zM581 387h1v1h-1zM582 385h1v4h-1zM583 384h1v3h-1zM584 383h1v2h-1zM585 382h1v4h-1zM586 383h2v3h-2zM588 383h2v2h-2zM590 382h1v2h-1zM591 382h1v3h-1zM592 381h1v3h-1zM593 381h1v2h-1zM594 382h1v2h-1zM595 381h1v2h-1zM596 380h1v3h-1zM597 381h1v2h-1zM598 382h1v2h-1zM599 383h1v2h-1zM600 383h1v3h-1zM601 384h1v3h-1zM602 386h1v2h-1zM603 387h1v2h-1zM604 387h1v1h-1zM605 386h1v3h-1zM606 386h1v2h-1zM607 386h2v1h-2zM609 386h1v2h-1zM610 387h1v1h-1zM611 387h1v3h-1zM612 388h1v2h-1zM613 389h1v2h-1zM614 390h1v1h-1zM615 390h1v2h-1zM616 391h1v2h-1zM617 392h2v1h-2zM619 392h1v2h-1zM620 393h2v2h-2zM622 394h1v1h-1zM623 394h1v2h-1zM624 395h1v1h-1zM625 395h2v2h-2zM627 395h1v3h-1zM628 397h3v2h-3zM631 398h2v2h-2zM633 399h1v1h-1zM634 399h1v2h-1zM635 400h1v1h-1zM636 400h2v2h-2zM638 401h2v1h-2zM640 401h1v2h-1zM641 402h3v1h-3zM644 402h1v2h-1zM645 403h2v1h-2zM647 403h3v2h-3zM650 404h3v2h-3zM653 405h3v1h-3zM656 405h1v2h-1zM657 406h1v1h-1zM658 405h1v2h-1zM659 406h6v1h-6zM665 406h2v2h-2zM667 407h1084v1h-1084z" fill="#1fc3d3"/>
<path d="M3 641h191v1h-191zM194 641h1v2h-1zM195 642h5v1h-5zM200 642h1v2h-1zM201 643h2v1h-2zM203 643h1v2h-1zM204 644h1v2h-1zM205 642h1v5h-1zM206 642h1v3h-1zM207 643h1v2h-1zM208 643h1v5h-1zM209 646h1v2h-1zM210 646h1v4h-1zM211 647h1v3h-1zM212 647h1v2h-1zM213 644h1v5h-1zM214 644h1v4h-1zM215 646h1v3h-1zM216 645h1v4h-1zM217 645h1v2h-1zM218 646h2v6h-2zM220 645h1v2h-1zM221 644h1v3h-1zM222 645h2v3h-2zM224 645h2v4h-2zM226 645h1v2h-1zM227 644h1v3h-1zM228 644h1v1h-1zM229 643h1v2h-1zM230 644h1v5h-1zM231 643h1v6h-1zM232 643h1v3h-1zM233 645h1v2h-1zM234 644h1v3h-1zM235 644h1v2h-1zM236 644h1v4h-1zM237 643h1v5h-1zM238 642h1v4h-1zM239 642h1v3h-1zM240 644h1v2h-1zM241 645h1v3h-1zM242 645h1v2h-1zM243 644h1v5h-1zM244 646h1v2h-1zM245 645h1v3h-1zM246 645h2v2h-2zM248 644h1v4h-1zM249 645h1v1h-1zM250 645h1v2h-1zM251 645h1v1h-1zM252 644h1v2h-1zM253 643h2v3h-2zM255 643h1v2h-1zM256 643h2v3h-2zM258 643h3v2h-3zM261 642h1v3h-1zM262 642h1v2h-1zM263 643h1v3h-1zM264 643h1v4h-1zM265 643h1v3h-1zM266 643h2v2h-2zM268 644h1v1h-1zM269 643h2v2h-2zM271 642h1v3h-1zM272 641h1v3h-1zM273 642h1v2h-1zM274 642h1v1h-1zM275 642h3v2h-3zM278 639h1v4h-1zM279 640h1v2h-1zM280 640h1v3h-1zM281 639h1v4h-1zM282 639h1v3h-1zM283 639h1v4h-1zM284 641h1v4h-1zM285 640h1v4h-1zM286 640h1v3h-1zM287 642h1v3h-1zM288 643h1v3h-1zM289 642h1v3h-1zM290 643h1v2h-1zM291 642h1v4h-1zM292 643h1v3h-1zM293 644h1v3h-1zM294 644h2v2h-2zM296 643h2v3h-2zM298 644h1v2h-1zM299 644h1v3h-1zM300 643h1v7h-1zM301 643h1v6h-1zM302 641h1v4h-1zM303 641h1v5h-1zM304 643h2v3h-2zM306 642h2v2h-2zM308 641h1v3h-1zM309 641h1v2h-1zM310 641h1v3h-1zM311 643h1v2h-1zM312 642h1v2h-1zM313 642h1v3h-1zM314 643h1v3h-1zM315 644h1v4h-1zM316 644h1v5h-1zM317 644h1v4h-1zM318 644h1v3h-1zM319 644h2v2h-2zM321 644h1v3h-1zM322 644h2v2h-2zM324 643h2v3h-2zM326 644h1v3h-1zM327 645h1v2h-1zM328 644h1v2h-1zM329 644h1v5h-1zM330 645h2v3h-2zM332 645h1v2h-1zM333 646h1v2h-1zM334 645h1v3h-1zM335 646h1v1h-1zM336 645h1v4h-1zM337 647h1v7h-1zM338 647h1v6h-1zM339 647h3v2h-3zM342 646h1v4h-1zM343 648h3v2h-3zM346 648h2v3h-2zM348 647h1v4h-1zM349 647h1v3h-1zM350 648h1v2h-1zM351 647h1v3h-1zM352 647h1v2h-1zM353 648h1v8h-1zM354 647h1v8h-1zM355 647h2v3h-2zM357 647h1v2h-1zM358 647h2v3h-2zM360 646h1v3h-1zM361 646h1v4h-1zM362 647h1v4h-1zM363 648h1v2h-1zM364 646h1v4h-1zM365 647h1v2h-1zM366 647h1v3h-1zM367 646h1v4h-1zM368 647h2v2h-2zM370 647h1v3h-1zM371 648h2v7h-2zM373 647h1v3h-1zM374 645h2v4h-2zM376 646h1v3h-1zM377 647h1v2h-1zM378 646h1v3h-1zM379 645h1v3h-1zM380 647h1v1h-1zM381 647h1v2h-1zM382 646h1v3h-1zM383 646h1v4h-1zM384 646h1v3h-1zM385 646h1v2h-1zM386 646h1v3h-1zM387 645h1v4h-1zM388 646h1v3h-1zM389 647h1v2h-1zM390 647h1v6h-1zM391 645h1v9h-1zM392 644h1v3h-1zM393 643h1v3h-1zM394 643h1v4h-1zM395 643h1v2h-1zM396 642h2v2h-2zM398 642h1v3h-1zM399 641h2v4h-2zM401 642h1v3h-1zM402 642h1v2h-1zM403 641h1v2h-1zM404 642h1v2h-1zM405 641h1v3h-1zM406 640h1v4h-1zM407 642h1v2h-1zM408 643h1v1h-1zM409 642h1v3h-1zM410 642h2v4h-2zM412 643h3v2h-3zM415 644h2v1h-2zM417 643h1v3h-1zM418 644h1v1h-1zM419 643h1v2h-1zM420 642h1v3h-1zM421 643h1v2h-1zM422 642h1v4h-1zM423 643h1v3h-1zM424 644h3v2h-3zM427 644h3v3h-3zM430 646h1v2h-1zM431 645h1v3h-1zM432 644h1v3h-1zM433 645h1v2h-1zM434 644h1v4h-1zM435 644h1v3h-1zM436 645h1v4h-1zM437 646h1v2h-1zM438 646h1v1h-1zM439 645h1v2h-1zM440 645h1v4h-1zM441 646h1v2h-1zM442 646h1v4h-1zM443 647h1v3h-1zM444 645h1v4h-1zM445 646h1v1h-1zM446 645h1v2h-1zM447 644h1v5h-1zM448 646h1v2h-1zM449 646h1v3h-1zM450 646h1v2h-1zM451 645h1v2h-1zM452 645h2v4h-2zM454 645h1v2h-1zM455 645h1v3h-1zM456 646h1v8h-1zM457 648h1v6h-1zM458 647h1v2h-1zM459 647h3v1h-3zM462 647h1v2h-1zM463 646h1v3h-1zM464 645h1v3h-1zM465 646h1v5h-1zM466 646h1v4h-1zM467 644h1v4h-1zM468 643h1v5h-1zM469 645h1v4h-1zM470 645h1v3h-1zM471 645h1v4h-1zM472 644h1v5h-1zM473 640h1v8h-1zM474 641h1v7h-1zM475 637h1v11h-1zM476 638h1v5h-1zM477 634h1v8h-1zM478 631h1v5h-1zM479 631h1v10h-1zM480 636h1v9h-1zM481 640h1v5h-1zM482 641h1v4h-1zM483 642h1v4h-1zM484 644h1v5h-1zM485 638h1v13h-1zM486 635h1v8h-1zM487 636h1v7h-1zM488 635h1v3h-1zM489 633h1v6h-1zM490 631h1v6h-1zM491 633h1v7h-1zM492 632h1v8h-1zM493 635h1v10h-1zM494 636h1v9h-1zM495 635h1v4h-1zM496 633h1v4h-1zM497 634h1v7h-1zM498 636h1v4h-1zM499 638h1v7h-1zM500 631h1v17h-1zM501 634h1v12h-1zM502 636h1v9h-1zM503 636h1v7h-1zM504 637h1v6h-1zM505 636h1v8h-1zM506 632h1v8h-1zM507 632h1v9h-1zM508 633h1v8h-1zM509 637h1v5h-1zM510 640h1v4h-1zM511 638h1v5h-1zM512 632h1v12h-1zM513 634h1v8h-1zM514 636h1v6h-1zM515 637h1v4h-1zM516 626h1v13h-1zM517 626h1v12h-1zM518 633h1v4h-1zM519 634h1v2h-1zM520 634h1v9h-1zM521 629h1v15h-1zM522 631h1v5h-1zM523 631h1v8h-1zM524 634h1v2h-1zM525 629h1v8h-1zM526 626h1v6h-1zM527 630h1v7h-1zM528 629h1v6h-1zM529 630h1v5h-1zM530 631h1v5h-1zM531 626h1v7h-1zM532 625h1v12h-1zM533 632h2v3h-2zM535 631h1v5h-1zM536 632h1v3h-1zM537 630h1v4h-1zM538 627h2v6h-2zM540 630h1v2h-1zM541 629h2v4h-2zM543 631h1v4h-1zM544 632h1v3h-1zM545 631h1v3h-1zM546 631h1v1h-1zM547 627h1v6h-1zM548 628h1v8h-1zM549 629h1v7h-1zM550 628h1v7h-1zM551 631h1v2h-1zM552 630h1v3h-1zM553 629h2v4h-2zM555 628h1v5h-1zM556 628h2v4h-2zM558 625h1v5h-1zM559 624h1v8h-1zM560 629h2v2h-2zM562 626h1v5h-1zM563 626h1v3h-1zM564 627h1v4h-1zM565 627h1v3h-1zM566 627h1v4h-1zM567 626h1v4h-1zM568 624h1v4h-1zM569 625h1v4h-1zM570 627h1v2h-1zM571 627h1v3h-1zM572 626h2v3h-2zM574 625h1v3h-1zM575 624h1v3h-1zM576 623h1v5h-1zM577 625h1v2h-1zM578 624h1v3h-1zM579 623h1v3h-1zM580 623h1v2h-1zM581 623h1v3h-1zM582 624h1v2h-1zM583 622h2v4h-2zM585 622h2v3h-2zM587 623h1v2h-1zM588 622h1v3h-1zM589 621h1v4h-1zM590 621h1v5h-1zM591 621h1v4h-1zM592 621h2v3h-2zM594 621h3v2h-3zM597 621h1v1h-1zM598 621h1v3h-1zM599 622h1v4h-1zM600 623h2v3h-2zM602 624h1v4h-1zM603 625h2v2h-2zM605 624h1v3h-1zM606 622h1v3h-1zM607 622h1v2h-1zM608 623h1v3h-1zM609 624h1v2h-1zM610 625h1v1h-1zM611 625h1v4h-1zM612 626h1v3h-1zM613 627h3v2h-3zM616 628h1v2h-1zM617 629h3v2h-3zM620 630h2v1h-2zM622 630h3v2h-3zM625 630h1v3h-1zM626 631h1v2h-1zM627 632h1v1h-1zM628 632h5v2h-5zM633 633h2v1h-2zM635 633h2v2h-2zM637 634h1v1h-1zM638 634h3v2h-3zM641 635h2v1h-2zM643 635h3v2h-3zM646 636h1v1h-1zM647 636h3v2h-3zM650 637h1v1h-1zM651 637h1v2h-1zM652 638h8v1h-8zM660 638h1v2h-1zM661 638h2v1h-2zM663 638h2v2h-2zM665 639h8v1h-8zM673 639h1v2h-1zM674 640h38v1h-38zM712 640h1v2h-1zM713 641h1038v1h-1038z" fill="#ea3354"/>
<path d="M3 875h191v1h-191zM194 875h1v2h-1zM195 876h5v1h-5zM200 876h2v2h-2zM202 877h1v1h-1zM203 877h1v2h-1zM204 876h1v4h-1zM205 876h1v5h-1zM206 878h1v3h-1zM207 877h1v3h-1zM208 878h1v3h-1zM209 876h1v5h-1zM210 877h1v8h-1zM211 882h1v2h-1zM212 879h1v6h-1zM213 879h1v4h-1zM214 880h1v3h-1zM215 880h1v2h-1zM216 879h1v3h-1zM217 879h1v4h-1zM218 881h1v3h-1zM219 879h1v5h-1zM220 879h1v3h-1zM221 879h1v2h-1zM222 879h1v3h-1zM223 878h1v3h-1zM224 879h1v2h-1zM225 878h1v3h-1zM226 879h1v2h-1zM227 878h1v3h-1zM228 879h2v2h-2zM230 879h1v3h-1zM231 878h1v4h-1zM232 878h1v2h-1zM233 878h1v3h-1zM234 878h2v2h-2zM236 878h1v3h-1zM237 877h1v4h-1zM238 876h1v3h-1zM239 877h1v4h-1zM240 878h1v2h-1zM241 879h1v1h-1zM242 877h1v3h-1zM243 878h1v3h-1zM244 879h1v2h-1zM245 878h1v2h-1zM246 879h1v1h-1zM247 878h2v3h-2zM249 878h1v2h-1zM250 877h2v3h-2zM252 878h1v3h-1zM253 878h1v2h-1zM254 878h1v3h-1zM255 877h1v3h-1zM256 878h1v4h-1zM257 877h1v3h-1zM258 877h1v2h-1zM259 877h1v4h-1zM260 878h1v2h-1zM261 877h1v3h-1zM262 876h1v3h-1zM263 876h1v4h-1zM264 876h1v3h-1zM265 876h1v4h-1zM266 877h1v4h-1zM267 877h1v2h-1zM268 876h1v3h-1zM269 875h3v2h-3zM272 874h1v3h-1zM273 875h1v2h-1zM274 874h1v2h-1zM275 874h1v3h-1zM276 875h1v3h-1zM277 874h1v3h-1zM278 875h2v3h-2zM280 875h2v2h-2zM282 875h3v3h-3zM285 876h1v3h-1zM286 875h1v4h-1zM287 875h1v3h-1zM288 876h1v4h-1zM289 876h1v3h-1zM290 877h1v3h-1zM291 878h1v2h-1zM292 877h1v5h-1zM293 879h1v3h-1zM294 878h1v2h-1zM295 877h1v2h-1zM296 878h1v3h-1zM297 879h1v2h-1zM298 878h1v3h-1zM299 877h1v3h-1zM300 878h1v4h-1zM301 877h1v5h-1zM302 877h1v4h-1zM303 877h1v2h-1zM304 876h1v2h-1zM305 875h1v3h-1zM306 876h1v2h-1zM307 876h1v3h-1zM308 875h1v4h-1zM309 875h1v2h-1zM310 876h1v2h-1zM311 876h1v3h-1zM312 877h1v2h-1zM313 877h1v1h-1zM314 877h1v2h-1zM315 877h1v3h-1zM316 878h4v2h-4zM320 878h1v3h-1zM321 878h1v2h-1zM322 877h1v4h-1zM323 878h1v3h-1zM324 878h1v2h-1zM325 878h1v3h-1zM326 879h1v2h-1zM327 878h1v3h-1zM328 877h2v3h-2zM330 877h1v5h-1zM331 878h1v4h-1zM332 878h2v3h-2zM334 879h1v3h-1zM335 880h1v4h-1zM336 881h1v2h-1zM337 881h2v6h-2zM339 880h2v4h-2zM341 881h1v2h-1zM342 881h1v4h-1zM343 882h1v4h-1zM344 882h1v3h-1zM345 883h1v2h-1zM346 881h1v5h-1zM347 881h3v3h-3zM350 881h1v2h-1zM351 881h1v4h-1zM352 882h1v2h-1zM353 882h2v5h-2zM355 881h1v3h-1zM356 880h1v3h-1zM357 879h1v3h-1zM358 880h2v3h-2zM360 880h1v2h-1zM361 881h1v2h-1zM362 881h1v3h-1zM363 879h2v5h-2zM365 881h1v3h-1zM366 880h2v3h-2zM368 881h1v3h-1zM369 880h1v4h-1zM370 879h1v3h-1zM371 878h1v11h-1zM372 879h1v10h-1zM373 879h1v3h-1zM374 880h1v3h-1zM375 879h1v4h-1zM376 879h3v2h-3zM379 879h2v3h-2zM381 880h3v2h-3zM384 880h1v3h-1zM385 881h1v1h-1zM386 881h1v2h-1zM387 879h1v5h-1zM388 879h1v3h-1zM389 880h1v3h-1zM390 881h1v6h-1zM391 880h1v8h-1zM392 877h1v6h-1zM393 877h1v3h-1zM394 876h1v4h-1zM395 877h1v3h-1zM396 875h1v5h-1zM397 876h1v2h-1zM398 876h2v4h-2zM400 876h1v2h-1zM401 877h2v2h-2zM403 877h1v3h-1zM404 876h1v5h-1zM405 876h3v3h-3zM408 878h1v2h-1zM409 877h1v2h-1zM410 876h1v3h-1zM411 876h2v4h-2zM413 877h1v1h-1zM414 877h2v2h-2zM416 877h2v3h-2zM418 877h1v2h-1zM419 878h2v3h-2zM421 878h1v2h-1zM422 877h1v3h-1zM423 877h1v4h-1zM424 877h1v5h-1zM425 877h1v3h-1zM426 878h1v1h-1zM427 878h1v2h-1zM428 878h3v3h-3zM431 879h1v3h-1zM432 878h1v4h-1zM433 878h1v2h-1zM434 879h1v1h-1zM435 879h2v2h-2zM437 878h1v3h-1zM438 877h2v5h-2zM440 879h2v3h-2zM442 878h1v5h-1zM443 878h1v6h-1zM444 878h1v5h-1zM445 879h1v3h-1zM446 879h1v4h-1zM447 879h1v3h-1zM448 880h1v1h-1zM449 880h1v4h-1zM450 881h1v3h-1zM451 880h1v3h-1zM452 880h2v2h-2zM454 880h2v3h-2zM456 880h1v6h-1zM457 878h1v9h-1zM458 878h1v3h-1zM459 877h1v4h-1zM460 879h1v3h-1zM461 880h1v3h-1zM462 881h1v2h-1zM463 880h1v3h-1zM464 880h1v4h-1zM465 879h2v4h-2zM467 879h1v3h-1zM468 877h1v5h-1zM469 878h1v4h-1zM470 880h1v3h-1zM471 877h1v7h-1zM472 876h1v6h-1zM473 876h1v5h-1zM474 877h1v3h-1zM475 871h1v8h-1zM476 872h1v3h-1zM477 867h1v7h-1zM478 868h1v3h-1zM479 869h1v3h-1zM480 869h1v5h-1zM481 870h1v5h-1zM482 870h1v8h-1zM483 872h1v5h-1zM484 872h1v9h-1zM485 878h1v3h-1zM486 874h1v8h-1zM487 869h2v9h-2zM489 866h1v11h-1zM490 865h1v10h-1zM491 870h1v4h-1zM492 868h1v6h-1zM493 872h1v4h-1zM494 873h1v6h-1zM495 869h1v8h-1zM496 868h1v9h-1zM497 868h1v12h-1zM498 871h1v5h-1zM499 868h1v6h-1zM500 869h1v3h-1zM501 869h1v6h-1zM502 869h1v7h-1zM503 870h1v5h-1zM504 868h1v6h-1zM505 869h1v4h-1zM506 870h1v2h-1zM507 869h1v4h-1zM508 866h1v11h-1zM509 868h1v10h-1zM510 867h1v11h-1zM511 870h1v8h-1zM512 867h1v6h-1zM513 867h1v3h-1zM514 867h1v7h-1zM515 869h1v5h-1zM516 867h1v5h-1zM517 865h1v13h-1zM518 862h1v14h-1zM519 864h1v9h-1zM520 870h1v5h-1zM521 866h1v7h-1zM522 865h1v9h-1zM523 870h1v5h-1zM524 870h1v4h-1zM525 867h1v8h-1zM526 866h1v8h-1zM527 868h1v8h-1zM528 868h1v4h-1zM529 867h1v3h-1zM530 868h1v4h-1zM531 864h1v9h-1zM532 865h1v6h-1zM533 867h1v5h-1zM534 866h1v5h-1zM535 868h1v4h-1zM536 867h1v4h-1zM537 868h1v3h-1zM538 866h1v3h-1zM539 867h1v2h-1zM540 865h1v6h-1zM541 862h1v8h-1zM542 864h1v5h-1zM543 865h1v6h-1zM544 867h1v4h-1zM545 867h1v2h-1zM546 864h1v6h-1zM547 863h1v7h-1zM548 866h1v4h-1zM549 865h1v3h-1zM550 865h1v7h-1zM551 863h1v10h-1zM552 863h1v6h-1zM553 866h1v5h-1zM554 868h1v2h-1zM555 867h1v3h-1zM556 865h3v4h-3zM559 866h1v3h-1zM560 865h1v3h-1zM561 865h1v2h-1zM562 865h1v3h-1zM563 862h1v6h-1zM564 863h1v4h-1zM565 862h1v4h-1zM566 863h1v3h-1zM567 861h1v6h-1zM568 861h1v5h-1zM569 863h1v5h-1zM570 863h2v3h-2zM572 862h1v5h-1zM573 862h1v4h-1zM574 864h1v4h-1zM575 864h1v3h-1zM576 860h1v7h-1zM577 861h1v5h-1zM578 862h1v4h-1zM579 863h1v3h-1zM580 862h1v3h-1zM581 861h2v4h-2zM583 860h1v5h-1zM584 860h1v2h-1zM585 859h1v3h-1zM586 859h1v4h-1zM587 860h1v3h-1zM588 860h1v2h-1zM589 858h1v4h-1zM590 857h1v4h-1zM591 858h1v3h-1zM592 859h1v3h-1zM593 858h1v3h-1zM594 856h1v3h-1zM595 856h1v2h-1zM596 855h1v3h-1zM597 855h2v2h-2zM599 856h1v3h-1zM600 857h1v2h-1zM601 856h1v4h-1zM602 858h1v3h-1zM603 859h1v3h-1zM604 858h1v3h-1zM605 858h1v2h-1zM606 859h1v2h-1zM607 858h2v2h-2zM609 857h1v3h-1zM610 859h1v1h-1zM611 859h2v2h-2zM613 860h1v3h-1zM614 861h1v4h-1zM615 862h1v3h-1zM616 862h1v2h-1zM617 863h1v2h-1zM618 863h1v3h-1zM619 864h1v2h-1zM620 864h1v3h-1zM621 865h4v2h-4zM625 865h1v3h-1zM626 867h1v1h-1zM627 867h2v2h-2zM629 868h2v1h-2zM631 868h3v2h-3zM634 869h1v1h-1zM635 869h3v2h-3zM638 870h1v1h-1zM639 870h1v2h-1zM640 870h1v1h-1zM641 870h4v2h-4zM645 871h1v1h-1zM646 871h3v2h-3zM649 872h5v1h-5zM654 872h1v2h-1zM655 873h1v1h-1zM656 872h2v2h-2zM658 873h3v1h-3zM661 873h2v2h-2zM663 874h9v1h-9zM672 874h2v2h-2zM674 875h1077v1h-1077z" fill="#8ec832"/>
<line x1="6" y1="173.5" x2="1751" y2="173.5" stroke="#b4b4b8" stroke-width="1" stroke-dasharray="5 5"/>
<line x1="6" y1="407.5" x2="1751" y2="407.5" stroke="#b4b4b8" stroke-width="1" stroke-dasharray="5 5"/>
<line x1="6" y1="641.5" x2="1751" y2="641.5" stroke="#b4b4b8" stroke-width="1" stroke-dasharray="5 5"/>
<line x1="6" y1="875.5" x2="1751" y2="875.5" stroke="#b4b4b8" stroke-width="1" stroke-dasharray="5 5"/>
<line x1="108.5" y1="101" x2="108.5" y2="289" stroke="#c8c8c8" stroke-width="1" stroke-dasharray="5 5"/>
<line x1="108.5" y1="295" x2="108.5" y2="523" stroke="#c8c8c8" stroke-width="1" stroke-dasharray="5 5"/>
<line x1="108.5" y1="529" x2="108.5" y2="757" stroke="#c8c8c8" stroke-width="1" stroke-dasharray="5 5"/>
<line x1="108.5" y1="763" x2="108.5" y2="991" stroke="#c8c8c8" stroke-width="1" stroke-dasharray="5 5"/>
<path d="M9 160.7H29.5L41 173L29.5 185.3H9Q6.7 185.3 6.7 183.0V163.0Q6.7 160.7 9 160.7Z" fill="#1e1d0a" stroke="#eeee10" stroke-width="1.5"/>
<text x="15" y="177" font-size="11" fill="#e8e41c">C</text>
<text x="26.5" y="177" font-size="11" fill="#e8e41c">1</text>
<text x="54.5" y="178" font-size="18" fill="#e8e41c" textLength="92" lengthAdjust="spacingAndGlyphs">U_BPP HFS</text>
<path d="M9 394.7H29.5L41 407L29.5 419.3H9Q6.7 419.3 6.7 417.0V397.0Q6.7 394.7 9 394.7Z" fill="#0b1a1c" stroke="#1fc3d3" stroke-width="1.5"/>
<text x="15" y="411" font-size="11" fill="#22c8d8">C</text>
<text x="26.5" y="411" font-size="11" fill="#22c8d8">2</text>
<text x="54.5" y="412" font-size="18" fill="#22c8d8" textLength="88" lengthAdjust="spacingAndGlyphs">U_BPP LFS</text>
<path d="M9.5 629H29.5L41 641L29.5 653H9.5Q7 653 7 650.5V631.5Q7 629 9.5 629Z" fill="#e84a69"/>
<text x="15" y="645" font-size="11" fill="#ffffff">C</text>
<text x="26.5" y="645" font-size="11" fill="#ffffff">3</text>
<text x="54.5" y="646" font-size="18" fill="#d8435f" textLength="78" lengthAdjust="spacingAndGlyphs">U_LP left</text>
<path d="M9 862.7H29.5L41 875L29.5 887.3H9Q6.7 887.3 6.7 885.0V865.0Q6.7 862.7 9 862.7Z" fill="#161b0a" stroke="#8ec832" stroke-width="1.5"/>
<text x="15" y="879" font-size="11" fill="#88c42e">C</text>
<text x="26.5" y="879" font-size="11" fill="#88c42e">4</text>
<text x="54.5" y="880" font-size="18" fill="#86c02c" textLength="91" lengthAdjust="spacingAndGlyphs">U_LP right</text>
<path d="M98 57H118L108 66.3Z" fill="#f39020"/>
<path d="M99 68H117V87H112L108.2 94L104.4 87H99Z" fill="#000" stroke="#f39020" stroke-width="2"/>
<path d="M103 72.9H112.2M107.6 72.9V82.7" stroke="#f39020" stroke-width="2" fill="none"/>
<rect x="1754" y="29" width="166" height="966" fill="#2e2e2e"/>
<circle cx="1762" cy="503" r="2.1" fill="#cdcdcd"/>
<circle cx="1762" cy="511.7" r="2.1" fill="#cdcdcd"/>
<circle cx="1762" cy="520.3" r="2.1" fill="#cdcdcd"/>
<rect x="1769" y="29" width="1" height="966" fill="#5c5c5c"/>
<rect x="1769" y="29" width="151" height="1" fill="#6a615a"/>
<rect x="1769" y="994" width="151" height="1" fill="#6a615a"/>
<path d="M1785.9 4H1803.7L1800.9 9H1796V25.75H1790.7V9H1785.9Z" fill="#fff"/>
<text x="1797.2" y="25.75" font-size="29" fill="#ffffff" font-weight="bold" stroke="#fff" stroke-width="0.9">e</text>
<path d="M1814.9 4H1819.9V25.75H1814.9Z" fill="#fff"/>
<path d="M1823.2 25.75H1830L1826.6 18.2Z" fill="#fff"/>
<path d="M1831.2 25.75H1835.9V14.5H1838.7V9.2H1835.9V4.8L1831.2 11Z" fill="#fff"/>
<path d="M1814.9 25.75H1822.4L1830.9 9.2H1825.25Z" fill="#1bbde0"/>
<text x="1839.4" y="25.75" font-size="29" fill="#ffffff" font-weight="bold" textLength="63" lengthAdjust="spacingAndGlyphs" stroke="#fff" stroke-width="0.9">ronix</text>
<text x="1844.5" y="43.7" font-size="14.5" fill="#ececec" text-anchor="middle" font-weight="bold" textLength="76" lengthAdjust="spacingAndGlyphs">Add New...</text>
<defs><linearGradient id="bg" x1="0" y1="0" x2="0" y2="1"><stop offset="0" stop-color="#3e3e3f"/><stop offset="0.35" stop-color="#333334"/><stop offset="1" stop-color="#262627"/></linearGradient><linearGradient id="hg" x1="0" y1="0" x2="0" y2="1"><stop offset="0" stop-color="#3f3f40"/><stop offset="0.2" stop-color="#313132"/><stop offset="1" stop-color="#222223"/></linearGradient></defs>
<rect x="1777.5" y="54.5" width="62" height="36" rx="5.5" fill="url(#bg)" stroke="#6e655e" stroke-width="1"/>
<rect x="1849.5" y="54.5" width="62" height="36" rx="5.5" fill="url(#bg)" stroke="#6e655e" stroke-width="1"/>
<rect x="1777.5" y="100.5" width="62" height="36" rx="5.5" fill="url(#bg)" stroke="#6e655e" stroke-width="1"/>
<rect x="1849.5" y="100.5" width="62" height="36" rx="5.5" fill="url(#bg)" stroke="#6e655e" stroke-width="1"/>
<rect x="1777.5" y="146.5" width="62" height="36" rx="5.5" fill="url(#bg)" stroke="#6e655e" stroke-width="1"/>
<rect x="1849.5" y="146.5" width="62" height="36" rx="5.5" fill="url(#bg)" stroke="#6e655e" stroke-width="1"/>
<rect x="1777.5" y="196.5" width="62" height="36" rx="5.5" fill="url(#bg)" stroke="#6e655e" stroke-width="1"/>
<rect x="1849.5" y="196.5" width="62" height="36" rx="5.5" fill="url(#bg)" stroke="#6e655e" stroke-width="1"/>
<text x="1808.5" y="76.7" font-size="15" fill="#ececec" text-anchor="middle" textLength="50" lengthAdjust="spacingAndGlyphs">Cursors</text>
<text x="1880.5" y="76.7" font-size="15" fill="#ececec" text-anchor="middle" textLength="48" lengthAdjust="spacingAndGlyphs">Callout</text>
<text x="1808.5" y="122.9" font-size="15" fill="#ececec" text-anchor="middle" textLength="58" lengthAdjust="spacingAndGlyphs">Measure</text>
<text x="1880.5" y="122.9" font-size="15" fill="#ececec" text-anchor="middle" textLength="46" lengthAdjust="spacingAndGlyphs">Search</text>
<text x="1808.5" y="160.8" font-size="15" fill="#ececec" text-anchor="middle" textLength="48" lengthAdjust="spacingAndGlyphs">Results</text>
<text x="1808.5" y="176.7" font-size="15" fill="#ececec" text-anchor="middle" textLength="35.5" lengthAdjust="spacingAndGlyphs">Table</text>
<text x="1880.5" y="168.8" font-size="15" fill="#ececec" text-anchor="middle" textLength="27.5" lengthAdjust="spacingAndGlyphs">Plot</text>
<text x="1880.5" y="219.2" font-size="15" fill="#ececec" text-anchor="middle" textLength="49.5" lengthAdjust="spacingAndGlyphs">More...</text>
<rect x="1773" y="189" width="144" height="1" fill="#6a615a"/>
<rect x="1773" y="241" width="144" height="1" fill="#6a615a"/>
<path d="M1796.2 202H1799.4V204H1796.2ZM1796.2 220.8H1799.4V222.8H1796.2ZM1802 202H1806.3V204H1802ZM1802 220.8H1806.3V222.8H1802ZM1809 202H1813.3V204H1809ZM1809 220.8H1813.3V222.8H1809ZM1816.2 202H1819.8V204H1816.2ZM1816.2 220.8H1819.8V222.8H1816.2ZM1796.2 202H1798.2V205H1796.2ZM1817.8 202H1819.8V205H1817.8ZM1796.2 207.2H1798.2V210.6H1796.2ZM1817.8 207.2H1819.8V210.6H1817.8ZM1796.2 213.6H1798.2V217.2H1796.2ZM1817.8 213.6H1819.8V217.2H1817.8ZM1796.2 219.8H1798.2V222.8H1796.2ZM1817.8 219.8H1819.8V222.8H1817.8Z" fill="#b4b4b4"/>
<circle cx="1810" cy="210.7" r="4.4" fill="#2e2e2e" stroke="#c0c0c0" stroke-width="1.6"/>
<path d="M1802.3 217.4L1806.4 214" stroke="#c0c0c0" stroke-width="2.4" stroke-linecap="round"/>
<path d="M1814.5 217.5L1822.5 224L1819 224.3L1821 228L1819.3 228.8L1817.3 225.2L1814.8 227.5Z" fill="#b8b8b8" stroke="#2e2e2e" stroke-width="0.6"/>
<path d="M3 1002Q3 999 6 999H90Q93 999 93 1002V1074Q93 1078 89 1078H7Q3 1078 3 1074Z" fill="#c9c9c9"/>
<path d="M3 1002Q3 999 6 999H90Q93 999 93 1002V1017.5H3Z" fill="#4b4521"/>
<rect x="3" y="1017.5" width="90" height="1.5" fill="#a9a9a9"/>
<text x="8.8" y="1013" font-size="15" fill="#e8e41c" textLength="28" lengthAdjust="spacingAndGlyphs">Ch 1</text>
<text x="10.8" y="1035.8" font-size="15" fill="#151515" textLength="76" lengthAdjust="spacingAndGlyphs">500 mV/div</text>
<text x="10.8" y="1055.8" font-size="15" fill="#151515" textLength="37" lengthAdjust="spacingAndGlyphs">1 MΩ</text>
<text x="10.8" y="1073.7" font-size="15" fill="#151515" textLength="44" lengthAdjust="spacingAndGlyphs">1 MHz</text>
<text x="77" y="1068" font-size="9" fill="#151515">B</text>
<text x="82.3" y="1071" font-size="9" fill="#151515">w</text>
<path d="M98 1002Q98 999 101 999H185Q188 999 188 1002V1074Q188 1078 184 1078H102Q98 1078 98 1074Z" fill="#c9c9c9"/>
<path d="M98 1002Q98 999 101 999H185Q188 999 188 1002V1017.5H98Z" fill="#1f4347"/>
<rect x="98" y="1017.5" width="90" height="1.5" fill="#a9a9a9"/>
<text x="103.8" y="1013" font-size="15" fill="#22c8d8" textLength="28" lengthAdjust="spacingAndGlyphs">Ch 2</text>
<text x="105.8" y="1035.8" font-size="15" fill="#151515" textLength="76" lengthAdjust="spacingAndGlyphs">500 mV/div</text>
<text x="105.8" y="1055.8" font-size="15" fill="#151515" textLength="37" lengthAdjust="spacingAndGlyphs">1 MΩ</text>
<text x="105.8" y="1073.7" font-size="15" fill="#151515" textLength="44" lengthAdjust="spacingAndGlyphs">1 MHz</text>
<text x="172" y="1068" font-size="9" fill="#151515">B</text>
<text x="177.3" y="1071" font-size="9" fill="#151515">w</text>
<path d="M193 1002Q193 999 196 999H280Q283 999 283 1002V1074Q283 1078 279 1078H197Q193 1078 193 1074Z" fill="#c9c9c9"/>
<path d="M193 1002Q193 999 196 999H280Q283 999 283 1002V1017.5H193Z" fill="#e8435f"/>
<rect x="193" y="1017.5" width="90" height="1.5" fill="#a9a9a9"/>
<text x="198.8" y="1013" font-size="15" fill="#ffeef0" textLength="28" lengthAdjust="spacingAndGlyphs">Ch 3</text>
<text x="200.8" y="1035.8" font-size="15" fill="#151515" textLength="76" lengthAdjust="spacingAndGlyphs">500 mV/div</text>
<text x="200.8" y="1055.8" font-size="15" fill="#151515" textLength="37" lengthAdjust="spacingAndGlyphs">1 MΩ</text>
<text x="200.8" y="1073.7" font-size="15" fill="#151515" textLength="44" lengthAdjust="spacingAndGlyphs">1 MHz</text>
<text x="267" y="1068" font-size="9" fill="#151515">B</text>
<text x="272.3" y="1071" font-size="9" fill="#151515">w</text>
<path d="M288 1002Q288 999 291 999H375Q378 999 378 1002V1074Q378 1078 374 1078H292Q288 1078 288 1074Z" fill="#c9c9c9"/>
<path d="M288 1002Q288 999 291 999H375Q378 999 378 1002V1017.5H288Z" fill="#333c1f"/>
<rect x="288" y="1017.5" width="90" height="1.5" fill="#a9a9a9"/>
<text x="293.8" y="1013" font-size="15" fill="#8cc832" textLength="28" lengthAdjust="spacingAndGlyphs">Ch 4</text>
<text x="295.8" y="1035.8" font-size="15" fill="#151515" textLength="76" lengthAdjust="spacingAndGlyphs">500 mV/div</text>
<text x="295.8" y="1055.8" font-size="15" fill="#151515" textLength="37" lengthAdjust="spacingAndGlyphs">1 MΩ</text>
<text x="295.8" y="1073.7" font-size="15" fill="#151515" textLength="44" lengthAdjust="spacingAndGlyphs">1 MHz</text>
<text x="362" y="1068" font-size="9" fill="#151515">B</text>
<text x="367.3" y="1071" font-size="9" fill="#151515">w</text>
<rect x="1117" y="998" width="1" height="78" fill="#5a524c"/>
<rect x="1267.5" y="998" width="1" height="78" fill="#5a524c"/>
<rect x="1810" y="998" width="1" height="78" fill="#5a524c"/>
<rect x="1127.9" y="998.8" width="38.5" height="77.4" rx="6" fill="url(#hg)" stroke="#675f58" stroke-width="1"/>
<rect x="1131.4" y="1005.8" width="32" height="2" fill="#f39020"/>
<text x="1147.1000000000001" y="1030.6" font-size="15" fill="#f0f0f0" text-anchor="middle">Add</text>
<text x="1147.1000000000001" y="1047.2" font-size="15" fill="#f0f0f0" text-anchor="middle">New</text>
<text x="1147.1000000000001" y="1063.6" font-size="15" fill="#f0f0f0" text-anchor="middle" textLength="36" lengthAdjust="spacingAndGlyphs">Math</text>
<rect x="1172.9" y="998.8" width="38.5" height="77.4" rx="6" fill="url(#hg)" stroke="#675f58" stroke-width="1"/>
<rect x="1176.4" y="1005.8" width="32" height="2" fill="#a9b0c6"/>
<text x="1192.1000000000001" y="1030.6" font-size="15" fill="#f0f0f0" text-anchor="middle">Add</text>
<text x="1192.1000000000001" y="1047.2" font-size="15" fill="#f0f0f0" text-anchor="middle">New</text>
<text x="1192.1000000000001" y="1063.6" font-size="15" fill="#f0f0f0" text-anchor="middle">Ref</text>
<rect x="1218.0" y="998.8" width="38.5" height="77.4" rx="6" fill="url(#hg)" stroke="#675f58" stroke-width="1"/>
<rect x="1221.5" y="1005.8" width="32" height="2" fill="#c45ef0"/>
<text x="1237.2" y="1030.6" font-size="15" fill="#f0f0f0" text-anchor="middle">Add</text>
<text x="1237.2" y="1047.2" font-size="15" fill="#f0f0f0" text-anchor="middle">New</text>
<text x="1237.2" y="1063.6" font-size="15" fill="#f0f0f0" text-anchor="middle">Bus</text>
<path d="M1279 1004Q1279 1000 1283 1000H1473.3Q1477.3 1000 1477.3 1004V1073Q1477.3 1077 1473.3 1077H1283Q1279 1077 1279 1073Z" fill="#c9c9c9" stroke="#0a0a0a" stroke-width="1.2"/>
<path d="M1279 1004Q1279 1000 1283 1000H1473.3Q1477.3 1000 1477.3 1004V1018.7H1279Z" fill="#5a5a5c"/>
<rect x="1279" y="1018.7" width="198.29999999999995" height="1.2" fill="#9a9a9a"/>
<text x="1284.3" y="1014.2" font-size="15" fill="#f2f2f2" textLength="71" lengthAdjust="spacingAndGlyphs">Horizontal</text>
<text x="1285" y="1036" font-size="15" fill="#151515" textLength="55.5" lengthAdjust="spacingAndGlyphs">4 ms/div</text>
<text x="1285" y="1054.8" font-size="15" fill="#151515" textLength="81" lengthAdjust="spacingAndGlyphs">SR: 2.5 MS/s</text>
<text x="1285" y="1073.6" font-size="15" fill="#151515" textLength="82" lengthAdjust="spacingAndGlyphs">RL: 100 kpts</text>
<text x="1391" y="1036" font-size="15" fill="#151515" textLength="38.8" lengthAdjust="spacingAndGlyphs">40 ms</text>
<text x="1391" y="1054.8" font-size="15" fill="#151515" textLength="62.6" lengthAdjust="spacingAndGlyphs">400 ns/pt</text>
<text x="1405" y="1073.6" font-size="15" fill="#151515" textLength="21" lengthAdjust="spacingAndGlyphs">6%</text>
<path d="M1391.2 1062.6H1400.3V1071.5H1397.5L1395.8 1074.8L1394 1071.5H1391.2Z" fill="#111" stroke="#f39020" stroke-width="1.5"/>
<path d="M1393.6 1065H1397.9M1395.75 1065V1070" stroke="#f6f6f6" stroke-width="1.3"/>
<path d="M1484 1003.8Q1484 999.8 1488 999.8H1638.3Q1642.3 999.8 1642.3 1003.8V1072.7Q1642.3 1076.7 1638.3 1076.7H1488Q1484 1076.7 1484 1072.7Z" fill="#c9c9c9" stroke="#0a0a0a" stroke-width="1.2"/>
<path d="M1484 1003.8Q1484 999.8 1488 999.8H1638.3Q1642.3 999.8 1642.3 1003.8V1019.3H1484Z" fill="#5a5a5c"/>
<rect x="1484" y="1019.3" width="158.29999999999995" height="1.2" fill="#9a9a9a"/>
<text x="1490.6" y="1013.5" font-size="15" fill="#f2f2f2" textLength="47.4" lengthAdjust="spacingAndGlyphs">Trigger</text>
<text x="1490.6" y="1036.2" font-size="15" fill="#151515" textLength="26.5" lengthAdjust="spacingAndGlyphs">Aux</text>
<path d="M1551 1035.8H1555.5L1563 1026.7H1567" stroke="#4a4a8a" stroke-width="1.2" fill="none"/>
<text x="1578" y="1036.2" font-size="15" fill="#151515" textLength="20.5" lengthAdjust="spacingAndGlyphs">1 V</text>
<path d="M1649.3 1003.8Q1649.3 999.8 1653.3 999.8H1793Q1797 999.8 1797 1003.8V1072.7Q1797 1076.7 1793 1076.7H1653.3Q1649.3 1076.7 1649.3 1072.7Z" fill="#c9c9c9" stroke="#0a0a0a" stroke-width="1.2"/>
<path d="M1649.3 1003.8Q1649.3 999.8 1653.3 999.8H1793Q1797 999.8 1797 1003.8V1019.3H1649.3Z" fill="#5a5a5c"/>
<rect x="1649.3" y="1019.3" width="147.70000000000005" height="1.2" fill="#9a9a9a"/>
<text x="1654.4" y="1013.5" font-size="15" fill="#f2f2f2" textLength="77" lengthAdjust="spacingAndGlyphs">Acquisition</text>
<text x="1655" y="1036.2" font-size="15" fill="#151515" textLength="56" lengthAdjust="spacingAndGlyphs">Manual,</text>
<text x="1791" y="1036.2" font-size="15" fill="#151515" text-anchor="end" textLength="54.4" lengthAdjust="spacingAndGlyphs">Analyze</text>
<text x="1655" y="1055" font-size="15" fill="#151515" textLength="114.5" lengthAdjust="spacingAndGlyphs">High Res: 16 bits</text>
<text x="1655" y="1073.7" font-size="15" fill="#151515" textLength="74" lengthAdjust="spacingAndGlyphs">Single: 1 /1</text>
<rect x="1822" y="999.5" width="88" height="33.4" rx="5" fill="#fe1e27" stroke="#6c6c6c" stroke-width="1"/>
<text x="1866" y="1019.3" font-size="13" fill="#ffffff" text-anchor="middle" font-weight="bold" textLength="51" lengthAdjust="spacingAndGlyphs">Stopped</text>
<rect x="1822" y="1043.2" width="88" height="33.3" rx="4" fill="#c9c9c9" stroke="#6c6c6c" stroke-width="1"/>
<text x="1866" y="1056.8" font-size="15" fill="#151515" text-anchor="middle" textLength="84" lengthAdjust="spacingAndGlyphs">10 Nov 2025</text>
<text x="1865.5" y="1073.2" font-size="15" fill="#151515" text-anchor="middle" textLength="78.6" lengthAdjust="spacingAndGlyphs">2:35:57 AM</text>
</svg></body></html>
